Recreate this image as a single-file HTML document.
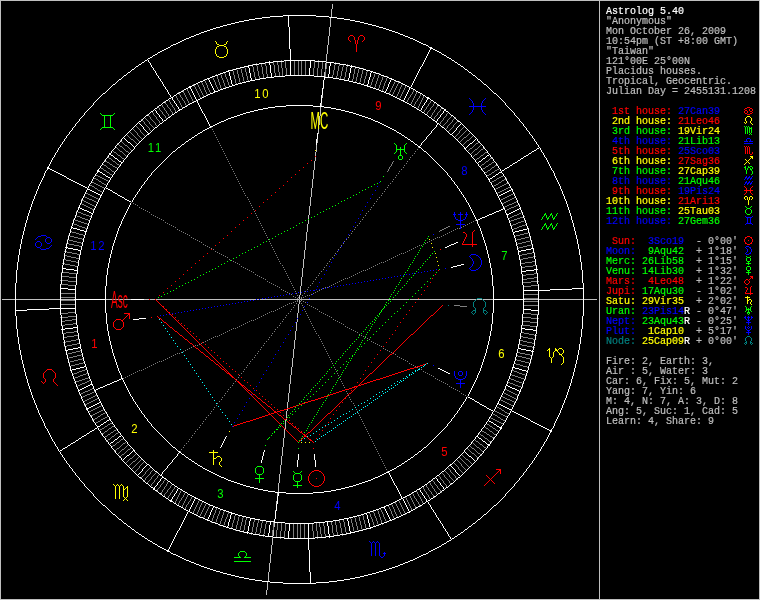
<!DOCTYPE html>
<html><head><meta charset="utf-8"><title>Astrolog 5.40</title>
<style>
html,body{margin:0;padding:0;background:#000}
#w{will-change:transform;position:relative;width:760px;height:600px;overflow:hidden;background:#000}
svg{position:absolute;left:0;top:0}
svg path,svg circle{fill:none;stroke-width:1;stroke-linecap:square}
svg path.p{stroke-linecap:butt}
svg text.h{font-family:"Liberation Sans",sans-serif;font-size:12.6px;letter-spacing:1.9px}
svg text{font-family:"Liberation Mono",monospace;font-size:10px;stroke:none}
#side{position:absolute;left:606px;top:7px;margin:0;font-family:"Liberation Mono",monospace;font-size:10px;line-height:10px;color:#bfbfbf;white-space:pre;-webkit-text-stroke:.2px;letter-spacing:0}
</style></head><body>
<div id="w">
<svg width="760" height="600" viewBox="0 0 760 600" shape-rendering="crispEdges"><g transform="translate(.5 .5)">
<path d="M2 299h595" stroke="#bfbfbf" transform="translate(-.5 0)" class="p"/><path d="M266 590v5M267 581v9M268 572v9M269 563v9M270 554v9M271 545v9M272 536v9M273 527v9M274 519v8M275 510v9M276 501v9M277 492v9M278 483v9M279 474v9M280 465v9M281 456v9M282 447v9M283 438v9M284 429v9M285 420v9M286 411v9M287 402v9M288 393v9M289 384v9M290 375v9M291 367v8M292 358v9M293 349v9M294 340v9M295 331v9M296 322v9M297 313v9M298 304v9M299 295v4M299 300v4M300 286v9M301 277v9M302 268v9M303 259v9M304 250v9M305 241v9M306 232v9M307 224v8M308 215v9M309 206v9M310 197v9M311 188v9M312 179v9M313 170v9M314 161v9M315 152v9M316 143v9M317 134v9M318 125v9M319 116v9M320 107v9M321 98v9M322 89v9M323 80v9M324 72v8M325 63v9M326 54v9M327 45v9M328 36v9M329 27v9M330 18v9M331 9v9M332 4v5" stroke="#bfbfbf" transform="translate(0 -.5)" class="p"/>
<path d="M464 137h2M131 139h2M467 140h2M476 143h2M125 145h2M120 146h2M470 148h2M475 149h2M481 149h2M120 151h2M126 151h2M114 152h2M485 152h2M475 154h2M118 155h2M481 155h2M109 158h2M122 158h2M477 158h2M490 158h2M105 161h2M113 161h2M486 161h2M107 162h2M492 162h2M110 164h2M117 164h2M482 164h2M489 164h2M104 165h2M495 165h2M113 166h2M486 166h2M115 167h2M492 167h2M101 168h2M108 168h2M483 168h2M497 169h2M104 170h2M488 170h2M495 170h2M112 171h2M107 172h2M485 172h2M492 172h2M110 174h2M489 174h2M96 175h2M487 175h2M98 176h2M501 176h2M100 177h2M499 177h2M94 178h2M102 178h2M497 178h2M96 179h2M104 179h2M504 179h2M106 180h2M494 180h2M502 180h2M99 181h2M492 181h2M92 182h2M499 182h2M94 183h2M102 183h2M506 183h2M96 184h2M104 184h2M496 184h2M504 184h2M90 185h2M98 185h2M494 185h2M502 185h2M92 186h2M100 186h2M500 186h2M102 187h2M498 187h2M508 187h2M95 188h2M496 188h2M506 188h2M504 189h2M98 190h2M502 190h2M100 191h2M500 191h2M498 192h2M86 193h2M513 193h2M88 194h2M511 194h2M90 195h2M509 195h2M83 196h2M92 196h2M507 196h2M85 197h2M94 197h2M505 197h2M514 197h2M87 198h2M96 198h2M503 198h2M512 198h2M89 199h3M501 199h2M510 199h2M82 200h2M92 200h2M508 200h2M84 201h2M94 201h2M506 201h2M516 201h2M86 202h2M96 202h2M504 202h2M514 202h2M80 203h2M88 203h2M502 203h2M512 203h2M82 204h2M90 204h2M509 204h3M518 204h2M84 205h2M92 205h2M507 205h2M516 205h2M86 206h2M94 206h2M505 206h2M514 206h2M88 207h2M503 207h2M511 207h3M90 208h2M509 208h2M92 209h2M507 209h2M505 210h2M76 211h2M78 212h3M521 212h2M81 213h2M519 213h2M83 214h3M517 214h2M75 215h2M86 215h3M514 215h3M77 216h3M89 216h2M512 216h2M523 216h2M80 217h2M510 217h2M520 217h3M82 218h3M508 218h2M517 218h3M73 219h2M85 219h3M514 219h3M75 220h3M88 220h2M511 220h3M524 220h2M78 221h3M509 221h2M521 221h3M81 222h3M518 222h3M72 223h2M84 223h3M516 223h2M74 224h3M87 224h2M513 224h3M525 224h2M77 225h2M511 225h2M522 225h3M79 226h3M519 226h3M82 227h3M517 227h2M85 228h2M514 228h3M512 229h2M70 231h2M72 232h4M528 232h2M76 233h3M524 233h4M79 234h4M520 234h4M68 235h2M83 235h2M516 235h4M70 236h4M514 236h2M529 236h2M74 237h4M525 237h4M78 238h4M521 238h4M67 239h2M82 239h2M517 239h4M69 240h4M515 240h2M530 240h2M73 241h4M526 241h4M77 242h4M522 242h4M66 243h3M81 243h2M518 243h4M69 244h5M516 244h2M531 244h2M74 245h5M527 245h4M79 246h3M523 246h4M519 247h4M517 248h2M64 251h3M67 252h5M532 252h3M72 253h5M527 253h5M77 254h3M522 254h5M64 255h3M519 255h3M67 256h4M533 256h3M71 257h5M528 257h5M76 258h3M523 258h5M63 259h3M520 259h3M66 260h5M71 261h5M532 261h4M76 262h3M525 262h7M62 263h3M521 263h4M65 264h5M70 265h5M533 265h4M75 266h3M525 266h8M521 267h4M61 272h8M69 273h8M534 273h4M526 274h8M522 275h4M61 276h8M69 277h8M534 277h4M527 278h7M523 279h4M60 280h8M68 281h8M531 281h8M523 282h8M60 284h8M68 285h8M531 285h8M523 286h8M60 293h16M523 294h16M60 297h16M523 298h16M60 300h16M523 301h16M60 304h16M523 305h16M68 312h8M60 313h8M523 313h8M531 314h8M68 316h8M60 317h8M523 317h8M531 318h8M72 319h4M65 320h7M61 321h4M522 321h8M530 322h8M73 323h4M65 324h8M61 325h4M522 325h8M530 326h8M74 331h4M66 332h8M521 332h3M62 333h4M524 333h5M529 334h5M74 335h4M534 335h3M67 336h7M520 336h3M63 337h4M523 337h5M528 338h5M76 339h3M533 339h3M71 340h5M520 340h3M66 341h5M523 341h4M63 342h3M527 342h5M77 343h3M532 343h3M72 344h5M519 344h3M67 345h5M522 345h5M64 346h3M527 346h5M532 347h3M80 350h2M76 351h4M72 352h4M517 352h3M68 353h4M520 353h5M66 354h2M81 354h2M525 354h5M77 355h4M516 355h2M530 355h3M73 356h4M518 356h4M69 357h4M522 357h4M67 358h2M82 358h2M526 358h4M78 359h4M515 359h2M530 359h2M74 360h4M517 360h4M70 361h4M521 361h4M68 362h2M83 362h2M525 362h4M79 363h4M514 363h2M529 363h2M75 364h4M516 364h4M71 365h4M520 365h3M69 366h2M523 366h4M527 367h2M85 369h2M82 370h3M512 370h2M79 371h3M514 371h3M77 372h2M517 372h2M74 373h3M86 373h2M519 373h3M72 374h2M83 374h3M510 374h2M522 374h3M80 375h3M512 375h3M525 375h2M78 376h2M515 376h3M75 377h3M88 377h2M518 377h3M73 378h2M85 378h3M509 378h2M521 378h3M82 379h3M511 379h3M524 379h2M79 380h3M89 380h2M514 380h2M76 381h3M87 381h2M516 381h3M74 382h2M85 382h2M508 382h2M519 382h3M82 383h3M510 383h3M522 383h2M80 384h2M513 384h2M78 385h2M515 385h3M76 386h2M518 386h3M521 387h2M92 388h2M90 389h2M505 389h2M88 390h2M507 390h2M85 391h3M94 391h2M509 391h2M83 392h2M92 392h2M511 392h2M81 393h2M90 393h2M504 393h2M513 393h2M79 394h2M87 394h3M506 394h2M515 394h2M85 395h2M95 395h2M508 395h2M517 395h2M83 396h2M93 396h2M501 396h2M510 396h2M81 397h2M91 397h2M503 397h2M512 397h2M89 398h2M97 398h2M505 398h2M514 398h2M87 399h2M95 399h2M507 399h3M516 399h2M85 400h2M93 400h2M501 400h2M510 400h2M83 401h2M91 401h2M503 401h2M512 401h2M89 402h2M505 402h2M514 402h2M87 403h2M507 403h2M85 404h2M509 404h2M511 405h2M99 406h2M97 407h2M497 407h2M95 408h2M499 408h2M93 409h2M91 410h2M101 410h2M502 410h2M89 411h2M99 411h2M495 411h2M97 412h2M497 412h2M505 412h2M95 413h2M103 413h2M499 413h2M507 413h2M93 414h2M101 414h2M493 414h2M501 414h2M91 415h2M495 415h2M503 415h2M98 416h2M505 416h2M105 417h2M498 417h2M95 418h2M103 418h2M491 418h2M93 419h2M101 419h2M493 419h2M501 419h2M495 420h2M503 420h2M98 421h2M497 421h2M96 422h2M499 422h2M110 423h2M501 423h2M108 424h2M487 424h2M105 426h2M112 426h2M490 426h2M102 428h2M109 428h2M486 428h2M493 428h2M100 429h2M114 430h2M496 430h2M105 431h2M482 431h2M490 431h2M111 432h2M484 432h2M102 433h2M116 433h2M108 434h2M487 434h2M494 434h2M481 435h2M105 436h2M112 436h2M490 436h2M492 437h2M485 438h2M108 439h2M121 439h2M476 441h2M489 441h2M117 442h2M123 443h2M480 444h2M113 445h2M477 447h2M484 447h2M117 448h2M472 448h2M122 449h2M128 449h2M472 453h2M478 453h2M122 454h2M130 458h2M466 459h2M133 461h2M81 199h1M84 405h1M85 192h1M88 412h1M89 184h1M90 416h1M91 181h1M92 420h1M93 177h1M94 187h1M95 174h1M95 423h1M97 189h1M97 417h1M98 180h1M98 199h1M99 430h1M100 167h1M100 415h1M100 420h1M101 182h1M101 405h1M101 434h1M102 163h1M102 192h1M103 164h1M103 169h1M103 409h1M104 160h1M104 188h1M104 427h1M104 432h1M104 437h1M105 412h1M106 166h1M106 171h1M106 185h1M106 441h1M107 156h1M107 167h1M107 416h1M107 425h1M107 430h1M107 435h1M107 440h1M108 157h1M108 181h1M108 429h1M109 163h1M109 173h1M110 169h1M110 433h1M110 438h1M111 159h1M111 170h1M111 427h1M111 437h1M111 447h1M112 150h1M112 160h1M112 165h1M112 175h1M112 422h1M112 446h1M113 151h1M113 431h1M114 172h1M114 425h1M114 435h1M114 451h1M115 146h1M115 162h1M115 434h1M115 444h1M115 450h1M116 147h1M116 153h1M116 163h1M116 429h1M116 443h1M116 449h1M117 143h1M117 148h1M117 154h1M117 168h1M117 454h1M118 144h1M118 149h1M118 432h1M118 453h1M119 145h1M119 150h1M119 165h1M119 441h1M119 447h1M119 452h1M119 457h1M120 140h1M120 156h1M120 440h1M120 446h1M120 451h1M120 456h1M121 141h1M121 157h1M121 445h1M121 450h1M121 455h1M122 142h1M122 147h1M122 152h1M122 444h1M123 143h1M123 148h1M123 153h1M123 438h1M124 144h1M124 149h1M124 154h1M124 159h1M124 448h1M124 453h1M125 150h1M125 155h1M125 442h1M125 447h1M125 452h1M125 463h1M126 134h1M126 156h1M126 441h1M126 446h1M126 451h1M126 462h1M127 135h1M127 146h1M127 445h1M127 450h1M127 461h1M128 136h1M128 147h1M128 152h1M128 444h1M128 460h1M128 466h1M129 131h1M129 137h1M129 148h1M129 153h1M129 459h1M129 465h1M130 132h1M130 138h1M130 149h1M130 448h1M130 464h1M131 133h1M131 150h1M131 447h1M131 463h1M131 469h1M132 128h1M132 134h1M132 457h1M132 462h1M132 468h1M133 129h1M133 135h1M133 140h1M133 456h1M133 467h1M134 130h1M134 136h1M134 141h1M134 455h1M134 466h1M134 472h1M135 125h1M135 131h1M135 137h1M135 142h1M135 454h1M135 460h1M135 465h1M135 471h1M136 126h1M136 132h1M136 138h1M136 143h1M136 453h1M136 459h1M136 464h1M136 470h1M137 127h1M137 139h1M137 144h1M137 458h1M137 463h1M137 469h1M138 128h1M138 135h1M138 140h1M138 457h1M138 462h1M138 468h1M139 129h1M139 136h1M139 141h1M139 456h1M139 461h1M140 137h1M140 460h1M140 465h1M140 478h1M141 119h1M141 132h1M141 138h1M141 459h1M141 464h1M141 477h1M142 120h1M142 133h1M142 139h1M142 463h1M142 476h1M143 121h1M143 134h1M143 462h1M143 475h1M143 481h1M144 117h1M144 135h1M144 461h1M144 474h1M144 480h1M145 118h1M145 124h1M145 136h1M146 119h1M146 125h1M146 471h1M146 477h1M146 483h1M147 114h1M147 120h1M147 126h1M147 470h1M147 476h1M147 482h1M148 115h1M148 121h1M148 127h1M148 469h1M148 475h1M148 481h1M149 116h1M149 468h1M149 474h1M149 480h1M150 124h1M150 130h1M150 467h1M150 479h1M150 486h1M151 111h1M151 119h1M151 125h1M151 131h1M151 471h1M152 112h1M152 120h1M152 126h1M152 470h1M152 476h1M152 483h1M153 121h1M153 127h1M153 469h1M153 475h1M153 482h1M154 115h1M154 122h1M154 128h1M154 474h1M155 116h1M155 473h1M155 479h1M156 125h1M156 472h1M156 478h1M156 491h1M157 106h1M157 119h1M157 126h1M158 107h1M158 120h1M158 475h1M158 488h1M159 474h1M159 487h1M160 110h1M160 123h1M160 494h1M161 104h1M161 111h1M161 484h1M162 483h1M163 107h1M163 114h1M163 489h1M163 496h1M164 101h1M164 115h1M164 480h1M165 110h1M165 479h1M165 486h1M165 493h1M166 104h1M166 118h1M166 492h1M167 113h1M167 498h1M168 99h1M168 107h1M168 481h1M168 489h1M169 108h1M169 116h1M169 488h1M169 495h1M171 104h1M171 111h1M171 485h1M171 492h1M172 484h1M173 107h1M173 114h1M173 489h1M174 503h1M175 95h1M175 486h1M176 112h1M177 505h1M178 92h1M178 100h1M180 500h1M181 97h1M181 490h1M181 507h1M182 90h1M182 107h1M182 497h1M183 100h1M184 509h1M185 492h1M186 88h1M186 105h1M187 504h1M188 494h1M189 103h1M189 501h1M192 496h1M192 513h1M193 84h1M193 101h1M199 500h1M206 503h1M398 500h1M399 81h1M399 98h1M405 497h1M406 85h1M406 102h1M409 97h1M409 495h1M410 104h1M411 94h1M412 493h1M412 510h1M413 106h1M414 89h1M415 498h1M416 101h1M416 491h1M416 508h1M417 91h1M417 108h1M417 501h1M418 98h1M419 496h1M420 506h1M421 93h1M422 486h1M423 112h1M423 503h1M424 95h1M425 109h1M425 484h1M425 491h1M426 114h1M427 106h1M427 487h1M427 494h1M428 111h1M429 103h1M429 110h1M429 482h1M429 490h1M430 117h1M430 491h1M430 499h1M431 100h1M431 107h1M431 485h1M432 106h1M432 480h1M432 494h1M433 112h1M433 119h1M433 481h1M433 488h1M434 103h1M434 497h1M435 102h1M435 109h1M435 116h1M435 484h1M435 491h1M436 115h1M436 485h1M437 494h1M438 104h1M438 112h1M438 475h1M438 488h1M439 111h1M439 124h1M439 476h1M439 489h1M441 108h1M441 121h1M441 472h1M441 479h1M441 492h1M442 107h1M442 120h1M442 126h1M442 473h1M442 480h1M443 125h1M443 474h1M444 117h1M444 124h1M444 470h1M444 483h1M445 116h1M445 123h1M445 129h1M445 471h1M445 477h1M445 484h1M446 122h1M446 128h1M446 472h1M446 478h1M447 113h1M447 467h1M447 473h1M447 479h1M447 487h1M448 112h1M448 119h1M448 125h1M448 131h1M448 468h1M448 474h1M448 480h1M449 118h1M449 124h1M449 130h1M449 469h1M450 117h1M450 123h1M450 129h1M450 477h1M450 483h1M451 116h1M451 122h1M451 128h1M451 472h1M451 478h1M451 484h1M452 115h1M452 127h1M452 473h1M452 479h1M453 119h1M453 462h1M453 474h1M453 480h1M454 118h1M454 124h1M454 137h1M454 463h1M454 475h1M454 481h1M455 117h1M455 123h1M455 136h1M455 464h1M456 122h1M456 135h1M456 459h1M456 465h1M456 478h1M457 121h1M457 134h1M457 139h1M457 460h1M457 466h1M457 479h1M458 120h1M458 133h1M458 138h1M458 461h1M459 137h1M459 142h1M459 457h1M459 462h1M459 469h1M460 130h1M460 136h1M460 141h1M460 458h1M460 463h1M460 470h1M461 129h1M461 135h1M461 140h1M461 454h1M461 459h1M461 471h1M462 128h1M462 134h1M462 139h1M462 145h1M462 455h1M462 460h1M462 466h1M462 472h1M463 127h1M463 133h1M463 138h1M463 144h1M463 456h1M463 461h1M463 467h1M463 473h1M464 126h1M464 132h1M464 143h1M464 457h1M464 462h1M464 468h1M465 131h1M465 142h1M465 458h1M465 463h1M465 469h1M466 130h1M466 136h1M466 141h1M466 464h1M466 470h1M467 129h1M467 135h1M467 151h1M467 448h1M467 465h1M468 134h1M468 150h1M468 449h1M468 460h1M468 466h1M469 133h1M469 139h1M469 149h1M469 445h1M469 450h1M469 461h1M469 467h1M470 132h1M470 138h1M470 154h1M470 446h1M470 451h1M470 462h1M471 137h1M471 153h1M471 447h1M471 452h1M471 463h1M472 136h1M472 147h1M472 152h1M472 157h1M472 442h1M472 464h1M473 135h1M473 146h1M473 151h1M473 156h1M473 443h1M474 145h1M474 150h1M474 155h1M474 439h1M474 444h1M474 449h1M474 454h1M475 144h1M475 160h1M475 440h1M475 445h1M475 450h1M475 455h1M476 159h1M476 446h1M476 451h1M476 456h1M477 148h1M477 153h1M477 452h1M477 457h1M478 142h1M478 147h1M478 152h1M478 442h1M478 458h1M479 141h1M479 146h1M479 151h1M479 157h1M479 433h1M479 443h1M479 448h1M480 145h1M480 150h1M480 156h1M480 166h1M480 434h1M480 449h1M480 454h1M481 144h1M481 165h1M481 430h1M481 450h1M481 455h1M482 169h1M482 445h1M482 451h1M483 148h1M483 154h1M483 436h1M483 446h1M483 452h1M484 147h1M484 153h1M484 163h1M484 173h1M484 426h1M484 437h1M485 162h1M485 167h1M485 427h1M486 176h1M486 423h1M486 433h1M486 448h1M487 151h1M487 171h1M487 439h1M488 160h1M488 165h1M488 429h1M488 440h1M489 159h1M489 425h1M489 430h1M489 435h1M490 169h1M490 417h1M491 163h1M491 168h1M491 173h1M491 182h1M491 442h1M492 157h1M492 413h1M492 427h1M492 432h1M493 186h1M493 433h1M494 161h1M494 166h1M494 171h1M494 410h1M494 438h1M495 189h1M495 429h1M496 179h1M496 406h1M496 435h1M497 164h1M497 193h1M497 416h1M498 183h1M498 431h1M499 168h1M500 200h1M500 399h1M500 418h1M501 181h1M501 409h1M503 175h1M503 392h1M503 424h1M504 411h1M505 421h1M506 178h1M507 417h1M508 182h1M509 414h1M510 186h1M513 406h1" stroke="#7f7f7f" transform="translate(-.5 0)" class="p"/><path d="M137 133v2M139 466v2M140 130v2M144 122v2M145 472v2M145 478v2M149 122v2M149 128v2M150 117v2M150 472v2M151 477v2M151 484v2M153 113v2M154 480v2M155 123v2M156 117v2M157 476v2M157 489v2M159 108v2M159 121v2M160 485v2M161 492v2M162 105v2M162 112v2M162 490v2M163 481v2M164 108v2M164 487v2M164 494v2M165 102v2M165 116v2M166 111v2M166 484v2M167 105v2M167 482v2M167 490v2M168 114v2M168 496v2M169 100v2M170 102v2M170 109v2M170 486v2M170 493v2M172 105v2M172 112v2M172 490v2M174 108v2M174 487v2M175 110v2M175 501v2M176 96v2M176 499v2M177 98v2M177 497v2M178 495v2M178 503v2M179 93v2M179 101v2M179 493v2M179 501v2M180 95v2M180 103v2M180 491v2M181 105v2M181 498v2M182 98v2M182 505v2M183 91v2M183 495v2M183 503v2M184 93v2M184 101v2M184 493v2M184 501v2M185 95v2M185 103v2M185 499v2M185 507v2M186 97v2M186 497v2M186 505v2M187 89v2M187 99v2M187 495v2M188 91v2M188 101v2M188 502v2M189 93v2M190 95v2M190 499v2M191 97v2M191 497v2M192 99v2M193 511v2M194 85v2M194 509v2M195 87v2M195 507v2M196 89v2M196 505v2M196 514v2M197 83v2M197 91v2M197 503v2M197 512v2M198 85v2M198 93v2M198 501v2M198 510v2M199 87v2M199 95v2M199 507v3M199 516v2M200 89v2M200 97v2M200 505v2M200 514v2M201 81v2M201 91v2M201 503v2M201 512v2M202 83v2M202 93v2M202 501v2M202 510v2M203 85v2M203 95v2M203 508v2M203 517v2M204 79v2M204 87v3M204 506v2M204 515v2M205 81v2M205 90v2M205 504v2M205 513v2M206 83v2M206 92v2M206 511v2M207 85v3M207 94v2M207 509v2M208 88v2M208 507v2M209 90v2M209 505v2M210 92v2M211 521v2M212 76v2M212 518v3M213 78v2M213 515v3M214 80v2M214 513v2M215 82v3M215 510v3M215 522v2M216 74v2M216 85v2M216 508v2M216 519v3M217 76v3M217 87v2M217 516v3M218 79v3M218 89v2M218 514v2M219 82v3M219 511v3M219 524v2M220 73v2M220 85v3M220 509v2M220 521v3M221 75v3M221 88v2M221 518v3M222 78v2M222 515v3M223 80v3M223 512v3M223 525v2M224 72v2M224 83v3M224 510v2M224 522v3M225 74v3M225 86v2M225 519v3M226 77v2M226 517v2M227 79v3M227 514v3M228 82v3M228 512v2M229 85v2M231 527v2M232 69v2M232 523v4M233 71v4M233 520v3M234 75v4M234 516v4M235 79v4M235 514v2M235 529v2M236 68v2M236 83v2M236 525v4M237 70v4M237 521v4M238 74v4M238 517v4M239 78v4M239 515v2M239 530v2M240 67v2M240 82v2M240 526v4M241 69v4M241 522v4M242 73v4M242 518v4M243 77v4M243 516v2M243 530v3M244 66v2M244 81v2M244 525v5M245 68v4M245 520v5M246 72v4M246 517v3M247 76v4M248 80v2M251 532v3M252 64v3M252 527v5M253 67v5M253 522v5M254 72v5M254 519v3M255 77v3M255 532v3M256 63v3M256 527v5M257 66v5M257 523v4M258 71v5M258 520v3M259 76v3M259 533v3M260 528v5M261 63v4M261 523v5M262 67v7M262 520v3M263 74v4M263 534v3M264 529v5M265 62v4M265 524v5M266 66v8M266 521v3M267 74v4M272 530v8M273 61v4M273 522v8M274 65v8M275 73v4M276 530v8M277 61v4M277 522v8M278 65v7M279 72v4M280 531v8M281 60v8M281 523v8M282 68v8M284 531v8M285 60v8M285 523v8M286 68v8M293 523v16M294 60v16M297 523v16M298 60v16M300 523v16M301 60v16M304 523v16M305 60v16M312 523v8M313 68v8M313 531v8M314 60v8M316 523v8M317 68v8M317 531v8M318 60v8M319 523v4M320 527v7M321 69v8M321 534v4M322 61v8M323 522v4M324 526v8M325 69v8M325 534v4M326 61v8M331 521v4M332 75v3M332 525v8M333 70v5M333 533v4M334 65v5M335 62v3M335 521v4M336 76v3M336 525v7M337 71v5M337 532v4M338 66v5M339 63v3M339 520v3M340 76v3M340 523v5M341 71v5M341 528v5M342 67v4M342 533v3M343 64v3M343 519v3M344 77v3M344 522v5M345 72v5M345 527v5M346 67v5M346 532v3M347 64v3M350 517v2M351 519v4M352 79v3M352 523v4M353 74v5M353 527v4M354 69v5M354 516v2M354 531v2M355 66v3M355 81v2M355 518v4M356 77v4M356 522v4M357 73v4M357 526v4M358 69v4M358 515v2M358 530v2M359 67v2M359 82v2M359 517v4M360 78v4M360 521v4M361 74v4M361 525v4M362 70v4M362 514v2M362 529v2M363 68v2M363 83v2M363 516v4M364 79v4M364 520v4M365 76v3M365 524v4M366 72v4M366 528v2M367 70v2M369 512v2M370 85v2M370 514v3M371 82v3M371 517v2M372 79v3M372 519v3M373 77v2M373 511v2M373 522v3M374 74v3M374 87v2M374 513v3M374 525v2M375 72v2M375 84v3M375 516v2M376 81v3M376 518v3M377 78v3M377 509v2M377 521v3M378 75v3M378 88v2M378 511v3M378 524v2M379 73v2M379 85v3M379 514v3M380 82v3M380 508v2M380 517v3M381 80v2M381 510v2M381 520v3M382 77v3M382 89v2M382 512v2M382 523v2M383 75v2M383 86v3M383 514v3M384 83v3M384 517v2M385 81v2M385 519v2M386 78v3M386 521v2M387 76v2M388 505v2M389 92v2M389 507v2M390 90v2M390 509v2M391 88v2M391 503v2M391 511v3M392 86v2M392 94v2M392 505v2M392 514v2M393 84v2M393 92v2M393 507v2M393 516v2M394 82v2M394 90v2M394 509v3M394 518v2M395 80v2M395 88v2M395 502v2M395 512v2M396 86v2M396 96v2M396 504v2M396 514v2M397 84v2M397 94v2M397 506v2M397 516v2M398 82v2M398 92v2M398 508v2M399 89v3M399 501v2M399 510v2M400 87v2M400 96v2M400 503v2M400 512v2M401 85v2M401 94v2M401 505v2M401 514v2M402 83v2M402 92v2M402 507v2M403 90v2M403 509v2M404 88v2M404 511v2M405 86v2M405 513v2M406 498v2M407 100v2M407 500v2M408 98v2M408 502v2M409 504v2M410 95v2M410 496v2M410 506v2M411 102v2M411 498v2M411 508v2M412 92v2M412 100v2M412 500v2M413 90v2M413 98v2M413 494v2M413 502v2M414 96v2M414 104v2M414 496v2M414 504v2M415 94v2M415 102v2M415 506v2M416 92v2M416 499v2M417 99v2M417 492v2M418 106v2M418 494v2M418 502v2M419 96v2M419 104v2M419 504v2M420 94v2M420 102v2M420 497v2M421 100v2M421 499v2M422 98v2M422 501v2M423 96v2M423 487v2M424 110v2M424 489v2M426 107v2M426 485v2M426 492v2M427 112v2M428 104v2M428 488v2M428 495v2M429 497v2M430 101v2M430 108v2M430 483v2M431 115v2M431 492v2M432 113v2M432 486v2M433 104v2M433 495v2M434 110v2M434 117v2M434 482v2M434 489v2M436 107v2M436 492v2M437 105v2M437 113v2M437 486v2M440 109v2M440 122v2M440 477v2M440 490v2M443 118v2M443 481v2M444 475v2M446 114v2M446 485v2M447 120v2M447 126v2M449 475v2M449 481v2M450 470v2M452 120v2M453 125v2M455 476v2M458 467v2M459 131v2M461 464v2" stroke="#7f7f7f" transform="translate(0 -.5)" class="p"/>
<path d="M128 142h2M470 143h2M111 155h2M487 155h2M115 158h2M483 158h2M119 161h2M479 161h2M98 171h2M100 172h2M499 172h2M103 174h2M496 174h2M106 176h2M493 176h2M108 177h2M490 178h2M88 189h2M511 189h2M90 190h2M509 190h2M92 191h2M507 191h2M94 192h2M505 192h2M96 193h2M503 193h2M98 194h2M501 194h2M499 195h2M78 207h2M80 208h2M519 208h2M82 209h2M517 209h2M84 210h3M515 210h2M87 211h2M513 211h2M89 212h2M511 212h2M91 213h2M509 213h2M507 214h2M71 227h2M73 228h4M527 228h2M77 229h3M523 229h4M80 230h4M519 230h4M84 231h2M515 231h4M513 232h2M65 247h3M68 248h5M531 248h3M73 249h5M526 249h5M78 250h3M521 250h5M518 251h3M62 268h4M66 269h8M534 269h4M74 270h4M526 270h8M522 271h4M60 288h8M68 289h8M523 290h16M60 308h16M523 309h8M531 310h8M73 327h4M65 328h8M521 328h4M61 329h4M525 329h8M533 330h4M78 347h3M73 348h5M518 348h3M68 349h5M521 349h5M65 350h3M526 350h5M531 351h3M84 366h2M80 367h4M513 367h2M76 368h4M515 368h4M72 369h4M519 369h3M70 370h2M522 370h4M526 371h2M90 384h2M88 385h2M506 385h2M86 386h2M508 386h2M84 387h2M510 387h2M82 388h2M512 388h3M80 389h2M515 389h2M78 390h2M517 390h2M519 391h2M99 402h2M97 403h2M95 404h2M499 404h2M93 405h2M501 405h2M91 406h2M503 406h2M89 407h2M505 407h2M87 408h2M507 408h2M509 409h2M107 420h2M489 421h2M104 422h2M491 422h2M101 424h2M494 424h2M98 426h2M497 426h2M499 427h2M119 436h2M479 438h2M115 439h2M483 441h2M111 442h2M487 444h2M127 455h2M469 456h2M86 409h1M87 188h1M97 170h1M97 427h1M100 195h1M100 425h1M102 173h1M103 423h1M105 175h1M106 421h1M109 153h1M109 419h1M109 444h1M110 154h1M110 178h1M110 443h1M113 156h1M113 441h1M114 157h1M114 440h1M117 159h1M117 438h1M118 160h1M118 437h1M121 162h1M121 435h1M122 460h1M123 137h1M123 459h1M124 138h1M124 458h1M125 139h1M125 457h1M126 140h1M126 456h1M127 141h1M129 454h1M130 143h1M130 453h1M131 144h1M131 452h1M132 145h1M132 451h1M133 146h1M133 450h1M134 147h1M137 475h1M138 122h1M138 474h1M139 123h1M139 473h1M140 124h1M140 472h1M141 125h1M141 471h1M142 126h1M143 468h1M144 129h1M144 467h1M145 130h1M145 466h1M146 131h1M146 465h1M147 132h1M147 464h1M148 133h1M153 489h1M154 109h1M155 110h1M155 486h1M156 485h1M157 113h1M158 114h1M158 482h1M159 481h1M160 117h1M161 118h1M161 478h1M162 477h1M163 121h1M170 501h1M171 97h1M173 100h1M173 496h1M175 103h1M175 493h1M177 106h1M178 488h1M179 109h1M188 511h1M189 86h1M195 498h1M402 498h1M403 100h1M410 87h1M419 489h1M420 110h1M421 492h1M423 105h1M423 495h1M425 102h1M425 498h1M427 501h1M428 97h1M435 477h1M436 121h1M436 478h1M438 118h1M438 481h1M439 117h1M439 482h1M441 114h1M441 485h1M442 113h1M442 486h1M444 110h1M444 489h1M445 109h1M450 465h1M451 134h1M451 466h1M452 133h1M452 467h1M453 132h1M453 468h1M454 131h1M454 469h1M455 130h1M456 472h1M457 127h1M457 473h1M458 126h1M458 474h1M459 125h1M459 475h1M460 124h1M460 476h1M461 123h1M464 451h1M465 148h1M465 452h1M466 147h1M466 453h1M467 146h1M467 454h1M468 145h1M468 455h1M469 144h1M471 457h1M472 142h1M472 458h1M473 141h1M473 459h1M474 140h1M474 460h1M475 139h1M475 461h1M476 138h1M477 163h1M477 436h1M478 162h1M478 437h1M481 160h1M481 439h1M482 159h1M482 440h1M485 157h1M485 442h1M486 156h1M486 443h1M488 420h1M489 154h1M489 179h1M489 445h1M492 177h1M493 423h1M495 175h1M496 425h1M498 173h1M498 196h1M498 403h1M501 171h1M501 428h1M511 410h1" stroke="#fff" transform="translate(-.5 0)" class="p"/><path d="M142 469v2M143 127v2M154 487v2M156 111v2M157 483v2M159 115v2M160 479v2M162 119v2M171 499v2M172 98v2M172 497v2M174 101v2M174 494v2M176 104v2M176 491v2M177 489v2M178 107v2M189 509v2M190 87v2M190 507v2M191 89v2M191 505v2M192 91v2M192 503v2M193 93v2M193 501v2M194 95v2M194 499v2M195 97v2M196 99v2M207 519v2M208 78v2M208 517v2M209 80v2M209 515v2M210 82v2M210 512v3M211 84v2M211 510v2M212 86v2M212 508v2M213 88v2M213 506v2M214 90v2M227 526v2M228 70v2M228 522v4M229 72v4M229 519v3M230 76v4M230 515v4M231 80v4M231 513v2M232 84v2M247 531v3M248 65v3M248 526v5M249 68v5M249 521v5M250 73v5M250 518v3M251 78v3M268 533v4M269 61v4M269 525v8M270 65v8M270 521v4M271 73v4M288 531v8M289 523v8M290 60v16M308 523v16M309 68v8M310 60v8M327 522v4M328 74v4M328 526v8M329 66v8M329 534v4M330 62v4M347 518v3M348 78v3M348 521v5M349 73v5M349 526v5M350 68v5M350 531v3M351 65v3M366 513v2M367 84v2M367 515v4M368 80v4M368 519v4M369 77v3M369 523v4M370 73v4M370 527v2M371 71v2M384 507v2M385 91v2M385 509v2M386 89v2M386 511v2M387 87v2M387 513v2M388 84v3M388 515v2M389 82v2M389 517v2M390 80v2M390 519v2M391 78v2M403 499v2M404 98v2M404 501v2M405 96v2M405 503v2M406 94v2M406 505v2M407 92v2M407 507v2M408 90v2M408 509v2M409 88v2M409 511v2M420 490v2M421 108v2M422 106v2M422 493v2M424 103v2M424 496v2M426 100v2M426 499v2M427 98v2M437 119v2M437 479v2M440 115v2M440 483v2M443 111v2M443 487v2M455 470v2M456 128v2" stroke="#fff" transform="translate(0 -.5)" class="p"/>
<path d="M283 15h33M270 16h13M316 16h13M262 17h8M329 17h8M255 18h7M337 18h7M249 19h6M344 19h6M244 20h5M350 20h5M239 21h5M355 21h5M235 22h4M360 22h4M231 23h4M364 23h4M227 24h4M368 24h4M223 25h4M372 25h4M220 26h3M376 26h3M216 27h4M379 27h4M213 28h3M383 28h3M210 29h3M386 29h3M207 30h3M389 30h3M204 31h3M392 31h3M201 32h3M395 32h3M199 33h2M398 33h2M196 34h3M400 34h3M194 35h2M403 35h2M191 36h3M405 36h3M189 37h2M408 37h2M186 38h3M410 38h3M184 39h2M413 39h2M182 40h2M415 40h2M180 41h2M417 41h2M178 42h2M419 42h2M176 43h2M421 43h2M173 44h3M423 44h3M171 45h2M426 45h2M168 47h2M429 47h3M166 48h2M430 48h3M164 49h2M433 49h2M162 50h2M435 50h2M160 51h2M437 51h2M158 52h2M439 52h2M155 54h2M442 54h2M153 55h2M444 55h2M150 57h2M447 57h2M148 58h2M449 58h2M145 60h2M284 60h31M452 60h2M273 61h11M315 61h11M142 62h2M265 62h8M326 62h8M455 62h2M259 63h6M334 63h6M139 64h2M253 64h6M340 64h6M458 64h2M249 65h4M346 65h4M136 66h2M244 66h5M350 66h5M461 66h2M240 67h4M355 67h4M236 68h4M359 68h4M132 69h2M233 69h3M363 69h3M465 69h2M229 70h4M366 70h4M226 71h3M370 71h3M128 72h2M223 72h3M373 72h3M469 72h2M220 73h3M376 73h3M218 74h2M379 74h2M124 75h2M215 75h3M285 75h29M381 75h3M473 75h2M212 76h3M274 76h11M314 76h11M384 76h3M210 77h2M266 77h8M324 77h9M387 77h2M207 78h3M260 78h6M333 78h6M389 78h3M119 79h2M205 79h2M255 79h5M339 79h5M392 79h2M478 79h2M203 80h2M250 80h5M344 80h5M394 80h2M200 81h3M246 81h4M349 81h4M396 81h3M198 82h2M242 82h4M353 82h4M399 82h2M196 83h2M238 83h4M357 83h4M401 83h2M113 84h2M194 84h2M235 84h3M361 84h3M403 84h2M484 84h2M192 85h2M232 85h3M364 85h3M405 85h2M190 86h2M229 86h3M367 86h3M407 86h2M188 87h2M226 87h3M370 87h3M409 87h2M186 88h2M223 88h3M373 88h3M411 88h2M184 89h2M220 89h3M376 89h3M413 89h2M218 90h2M379 90h2M181 91h2M215 91h3M381 91h3M416 91h2M179 92h2M213 92h2M384 92h2M418 92h2M103 93h2M177 93h2M210 93h3M386 93h3M420 93h2M494 93h2M208 94h2M389 94h2M174 95h2M206 95h2M391 95h2M423 95h2M204 96h2M393 96h2M171 97h2M202 97h2M395 97h2M426 97h2M169 98h2M200 98h2M397 98h2M428 98h2M198 99h2M399 99h2M166 100h2M196 100h2M401 100h2M431 100h2M194 101h2M403 101h2M163 102h2M192 102h2M405 102h2M434 102h2M190 103h2M407 103h2M188 104h2M409 104h2M159 105h2M286 105h27M438 105h2M185 106h2M275 106h11M313 106h11M412 106h2M183 107h2M268 107h7M324 107h7M414 107h2M155 108h2M263 108h5M331 108h5M442 108h2M180 109h2M258 109h5M336 109h5M417 109h2M178 110h2M254 110h4M341 110h4M419 110h2M151 111h2M250 111h4M345 111h4M446 111h2M175 112h2M246 112h4M349 112h4M422 112h2M243 113h3M353 113h3M172 114h2M240 114h3M356 114h3M425 114h2M146 115h2M237 115h3M359 115h3M451 115h2M234 116h3M362 116h3M168 117h2M231 117h3M365 117h3M429 117h2M228 118h3M368 118h3M226 119h2M371 119h2M164 120h2M224 120h2M373 120h2M433 120h2M139 121h2M221 121h3M375 121h3M458 121h2M219 122h2M378 122h2M160 123h2M217 123h2M380 123h2M437 123h2M215 124h2M382 124h2M213 125h2M384 125h2M210 126h3M386 126h2M155 127h2M209 127h2M388 127h2M442 127h2M207 128h2M390 128h2M205 129h2M392 129h2M203 130h2M394 130h2M200 132h2M397 132h2M198 133h2M399 133h2M147 134h2M450 134h2M195 135h2M402 135h2M192 137h2M405 137h2M189 139h2M408 139h2M186 141h2M411 141h2M182 144h2M415 144h2M418 146h2M178 147h2M419 147h2M537 148h2M534 150h2M173 151h2M424 151h2M532 151h2M529 153h2M526 155h2M524 156h2M521 158h2M518 160h2M515 162h2M513 163h2M510 165h2M47 167h2M507 167h2M47 168h3M505 168h2M50 169h2M52 170h2M502 170h2M54 171h2M56 172h2M58 173h2M60 174h2M62 175h2M64 176h2M67 178h2M69 179h2M71 180h2M73 181h2M75 182h2M77 183h2M79 184h2M81 185h2M83 186h2M85 187h2M106 188h2M108 189h2M110 190h2M113 192h2M115 193h2M118 195h2M120 196h2M122 197h2M125 199h2M127 200h2M129 201h2M503 208h2M501 209h2M499 210h2M496 211h3M494 212h2M492 213h2M489 214h3M487 215h2M485 216h2M482 217h3M480 218h2M478 219h2M476 220h2M572 288h12M550 289h22M538 290h12M74 299h32M493 299h32M49 308h12M27 309h22M15 310h12M121 378h2M119 379h2M117 380h2M114 381h3M112 382h2M110 383h2M107 384h3M105 385h2M103 386h2M100 387h3M98 388h2M96 389h2M94 390h2M468 397h2M470 398h2M472 399h2M475 401h2M477 402h2M480 404h2M482 405h2M484 406h2M487 408h2M489 409h2M491 410h2M512 411h2M514 412h2M516 413h2M518 414h2M520 415h2M522 416h2M524 417h2M526 418h2M528 419h2M531 421h2M533 422h2M535 423h2M537 424h2M539 425h2M541 426h2M543 427h2M95 428h2M545 428h2M547 429h2M92 430h2M549 430h3M90 431h2M550 431h2M87 433h2M84 435h2M82 436h2M79 438h2M76 440h2M73 442h2M71 443h2M68 445h2M65 447h2M173 447h2M424 447h2M63 448h2M60 450h2M178 451h2M419 451h2M179 452h2M182 454h2M415 454h2M186 457h2M411 457h2M189 459h2M408 459h2M192 461h2M405 461h2M195 463h2M402 463h2M147 464h2M450 464h2M198 465h2M399 465h2M200 466h2M397 466h2M203 468h2M394 468h2M205 469h2M392 469h2M207 470h2M390 470h2M155 471h2M209 471h2M388 471h2M442 471h2M211 472h2M386 472h3M213 473h2M384 473h2M215 474h2M382 474h2M160 475h2M217 475h2M380 475h2M437 475h2M219 476h2M378 476h2M139 477h2M221 477h3M375 477h3M458 477h2M164 478h2M224 478h2M373 478h2M433 478h2M226 479h2M371 479h2M228 480h3M368 480h3M168 481h2M231 481h3M365 481h3M429 481h2M234 482h3M362 482h3M146 483h2M237 483h3M359 483h3M451 483h2M172 484h2M240 484h3M356 484h3M425 484h2M243 485h3M353 485h3M175 486h2M246 486h4M349 486h4M422 486h2M151 487h2M250 487h4M345 487h4M446 487h2M178 488h2M254 488h4M341 488h4M419 488h2M180 489h2M258 489h5M336 489h5M417 489h2M155 490h2M263 490h5M331 490h5M442 490h2M183 491h2M268 491h7M324 491h7M414 491h2M185 492h2M275 492h11M313 492h11M412 492h2M159 493h2M286 493h27M438 493h2M188 494h2M409 494h2M190 495h2M407 495h2M163 496h2M192 496h2M405 496h2M434 496h2M194 497h2M403 497h2M166 498h2M196 498h2M401 498h2M431 498h2M198 499h2M399 499h2M169 500h2M200 500h2M397 500h2M428 500h2M171 501h2M202 501h2M395 501h2M426 501h2M204 502h2M393 502h2M174 503h2M206 503h2M391 503h2M423 503h2M208 504h2M389 504h2M103 505h2M177 505h2M210 505h3M386 505h3M420 505h2M494 505h2M179 506h2M213 506h2M384 506h2M418 506h2M181 507h2M215 507h3M381 507h3M416 507h2M218 508h2M379 508h2M184 509h2M220 509h3M376 509h3M413 509h2M186 510h2M223 510h3M373 510h3M411 510h2M188 511h2M226 511h3M370 511h3M409 511h2M190 512h2M229 512h3M367 512h3M407 512h2M192 513h2M232 513h3M364 513h3M405 513h2M113 514h2M194 514h2M235 514h3M361 514h3M403 514h2M484 514h2M196 515h2M238 515h4M357 515h4M401 515h2M198 516h2M242 516h4M353 516h4M399 516h2M200 517h3M246 517h4M349 517h4M396 517h3M203 518h2M250 518h5M344 518h5M394 518h2M119 519h2M205 519h2M255 519h5M339 519h5M392 519h2M478 519h2M207 520h3M260 520h6M333 520h6M389 520h3M210 521h2M266 521h9M325 521h8M387 521h2M212 522h3M274 522h11M314 522h11M384 522h3M124 523h2M215 523h3M285 523h29M381 523h3M473 523h2M218 524h2M379 524h2M220 525h3M376 525h3M128 526h2M223 526h3M373 526h3M469 526h2M226 527h3M370 527h3M229 528h4M366 528h4M132 529h2M233 529h3M363 529h3M465 529h2M236 530h4M359 530h4M240 531h4M355 531h4M136 532h2M244 532h5M350 532h5M461 532h2M249 533h4M346 533h4M139 534h2M253 534h6M340 534h6M458 534h2M259 535h6M334 535h6M142 536h2M265 536h8M326 536h8M455 536h2M273 537h11M315 537h11M145 538h2M284 538h31M452 538h2M148 540h2M449 540h2M150 541h2M447 541h2M153 543h2M444 543h2M155 544h2M442 544h2M158 546h2M439 546h2M160 547h2M437 547h2M162 548h2M435 548h2M164 549h2M433 549h2M166 550h3M431 550h2M167 551h3M429 551h2M171 553h2M426 553h2M173 554h3M423 554h3M176 555h2M421 555h2M178 556h2M419 556h2M180 557h2M417 557h2M182 558h2M415 558h2M184 559h2M413 559h2M186 560h3M410 560h3M189 561h2M408 561h2M191 562h3M405 562h3M194 563h2M403 563h2M196 564h3M400 564h3M199 565h2M398 565h2M201 566h3M395 566h3M204 567h3M392 567h3M207 568h3M389 568h3M210 569h3M386 569h3M213 570h3M383 570h3M216 571h4M379 571h4M220 572h3M376 572h3M223 573h4M372 573h4M227 574h4M368 574h4M231 575h4M364 575h4M235 576h4M360 576h4M239 577h5M355 577h5M244 578h5M350 578h5M249 579h6M344 579h6M255 580h7M337 580h7M262 581h8M329 581h8M270 582h13M316 582h13M283 583h33M46 170h1M46 428h1M47 169h1M48 166h1M53 157h1M53 441h1M56 152h1M56 446h1M59 147h1M59 451h1M61 144h1M61 454h1M62 449h1M63 141h1M63 457h1M65 138h1M65 460h1M66 177h1M67 135h1M67 446h1M67 463h1M68 134h1M68 464h1M70 131h1M70 444h1M70 467h1M71 130h1M71 468h1M73 127h1M73 471h1M74 126h1M74 472h1M75 441h1M76 123h1M76 475h1M77 122h1M77 476h1M78 121h1M78 439h1M78 477h1M80 118h1M80 480h1M81 117h1M81 437h1M81 481h1M82 116h1M82 482h1M83 115h1M83 483h1M85 112h1M85 486h1M86 111h1M86 434h1M86 487h1M87 110h1M87 488h1M88 109h1M88 489h1M89 108h1M89 432h1M89 490h1M90 107h1M90 183h1M90 415h1M90 491h1M91 106h1M91 492h1M92 105h1M92 493h1M94 102h1M94 176h1M94 389h1M94 422h1M94 429h1M94 496h1M95 101h1M95 497h1M96 100h1M96 173h1M96 425h1M96 498h1M97 99h1M97 499h1M98 98h1M98 500h1M99 97h1M99 168h1M99 430h1M99 501h1M100 96h1M100 502h1M101 95h1M101 165h1M101 433h1M101 503h1M102 94h1M102 504h1M103 162h1M103 436h1M104 161h1M104 437h1M105 92h1M105 187h1M105 411h1M105 506h1M106 91h1M106 158h1M106 440h1M106 507h1M107 90h1M107 157h1M107 441h1M107 508h1M108 89h1M108 182h1M108 416h1M108 509h1M109 88h1M109 154h1M109 444h1M109 510h1M110 87h1M110 153h1M110 445h1M110 511h1M111 86h1M111 177h1M111 421h1M111 512h1M112 85h1M112 150h1M112 191h1M112 448h1M112 513h1M113 149h1M113 174h1M113 424h1M113 449h1M114 148h1M114 450h1M115 83h1M115 171h1M115 427h1M115 515h1M116 82h1M116 145h1M116 170h1M116 428h1M116 453h1M116 516h1M117 81h1M117 144h1M117 194h1M117 454h1M117 517h1M118 80h1M118 143h1M118 167h1M118 431h1M118 455h1M118 518h1M119 142h1M119 166h1M119 432h1M119 456h1M120 141h1M120 457h1M121 78h1M121 163h1M121 435h1M121 520h1M122 77h1M122 138h1M122 162h1M122 379h1M122 436h1M122 460h1M122 521h1M123 76h1M123 137h1M123 461h1M123 522h1M124 136h1M124 159h1M124 198h1M124 439h1M124 462h1M125 135h1M125 158h1M125 440h1M125 463h1M126 74h1M126 134h1M126 157h1M126 441h1M126 464h1M126 524h1M127 73h1M127 133h1M127 465h1M127 525h1M128 132h1M128 154h1M128 444h1M128 466h1M129 131h1M129 153h1M129 445h1M129 467h1M130 71h1M130 130h1M130 152h1M130 446h1M130 468h1M130 527h1M131 70h1M131 129h1M131 151h1M131 202h1M131 396h1M131 447h1M131 469h1M131 528h1M132 128h1M132 150h1M132 448h1M132 470h1M133 127h1M133 149h1M133 449h1M133 471h1M134 68h1M134 126h1M134 197h1M134 401h1M134 472h1M134 530h1M135 67h1M135 125h1M135 146h1M135 452h1M135 473h1M135 531h1M136 124h1M136 145h1M136 194h1M136 404h1M136 453h1M136 474h1M137 123h1M137 144h1M137 454h1M137 475h1M138 65h1M138 122h1M138 143h1M138 191h1M138 407h1M138 455h1M138 476h1M138 533h1M139 142h1M139 456h1M140 141h1M140 188h1M140 410h1M140 457h1M141 63h1M141 120h1M141 140h1M141 458h1M141 478h1M141 535h1M142 119h1M142 139h1M142 185h1M142 413h1M142 459h1M142 479h1M143 118h1M143 138h1M143 184h1M143 414h1M143 460h1M143 480h1M144 61h1M144 117h1M144 137h1M144 461h1M144 481h1M144 537h1M145 116h1M145 136h1M145 181h1M145 417h1M145 462h1M145 482h1M146 135h1M146 180h1M146 418h1M146 463h1M147 59h1M147 539h1M148 114h1M148 177h1M148 421h1M148 484h1M149 62h1M149 113h1M149 133h1M149 176h1M149 422h1M149 465h1M149 485h1M150 112h1M150 132h1M150 175h1M150 423h1M150 466h1M150 486h1M151 131h1M151 467h1M152 56h1M152 67h1M152 130h1M152 172h1M152 426h1M152 468h1M152 542h1M153 110h1M153 129h1M153 171h1M153 427h1M153 469h1M153 488h1M154 70h1M154 109h1M154 128h1M154 170h1M154 428h1M154 470h1M154 489h1M155 169h1M155 429h1M156 168h1M156 430h1M157 53h1M157 75h1M157 107h1M157 126h1M157 167h1M157 431h1M157 472h1M157 491h1M157 545h1M158 106h1M158 125h1M158 166h1M158 432h1M158 473h1M158 492h1M159 78h1M159 124h1M159 165h1M159 433h1M159 474h1M160 164h1M160 434h1M161 81h1M161 104h1M161 163h1M161 435h1M161 474h1M161 494h1M162 103h1M162 122h1M162 162h1M162 436h1M162 476h1M162 495h1M163 121h1M163 161h1M163 437h1M163 471h1M163 477h1M164 86h1M164 160h1M164 438h1M164 470h1M165 101h1M165 159h1M165 439h1M165 469h1M165 497h1M166 89h1M166 119h1M166 158h1M166 440h1M166 468h1M166 479h1M167 118h1M167 157h1M167 441h1M167 480h1M168 99h1M168 156h1M168 442h1M168 465h1M168 499h1M168 549h1M169 94h1M169 155h1M169 443h1M169 464h1M170 46h1M170 116h1M170 154h1M170 444h1M170 463h1M170 482h1M170 552h1M171 115h1M171 153h1M171 445h1M171 462h1M171 483h1M172 152h1M172 446h1M173 96h1M173 459h1M173 502h1M174 113h1M174 458h1M174 485h1M175 150h1M175 448h1M175 457h1M176 94h1M176 149h1M176 449h1M176 456h1M176 504h1M177 111h1M177 148h1M177 450h1M177 487h1M178 453h1M178 530h1M180 146h1M181 145h1M181 453h1M182 108h1M182 490h1M183 90h1M183 508h1M184 143h1M184 455h1M185 142h1M185 456h1M187 105h1M187 493h1M188 140h1M188 458h1M191 138h1M191 460h1M194 136h1M194 462h1M197 134h1M197 464h1M202 131h1M202 467h1M203 113h1M395 485h1M396 131h1M396 467h1M401 134h1M401 464h1M404 136h1M404 462h1M407 138h1M407 460h1M410 140h1M410 458h1M411 105h1M411 493h1M413 142h1M413 456h1M414 143h1M414 455h1M415 90h1M415 508h1M416 108h1M416 490h1M417 145h1M417 453h1M418 452h1M420 145h1M421 66h1M421 111h1M421 148h1M421 450h1M421 487h1M422 94h1M422 142h1M422 149h1M422 449h1M422 504h1M423 141h1M423 150h1M423 448h1M424 113h1M424 140h1M424 485h1M425 96h1M425 139h1M425 502h1M426 152h1M426 446h1M427 115h1M427 136h1M427 153h1M427 445h1M427 483h1M428 46h1M428 116h1M428 135h1M428 154h1M428 444h1M428 482h1M428 552h1M429 134h1M429 155h1M429 443h1M429 504h1M430 49h1M430 99h1M430 133h1M430 156h1M430 442h1M430 499h1M431 118h1M431 157h1M431 441h1M431 480h1M432 119h1M432 130h1M432 158h1M432 440h1M432 479h1M432 509h1M433 101h1M433 129h1M433 159h1M433 439h1M433 497h1M434 128h1M434 160h1M434 438h1M434 512h1M435 121h1M435 127h1M435 161h1M435 437h1M435 477h1M436 103h1M436 122h1M436 162h1M436 436h1M436 476h1M436 495h1M437 104h1M437 124h1M437 163h1M437 435h1M437 494h1M437 517h1M438 164h1M438 434h1M439 124h1M439 165h1M439 433h1M439 474h1M439 520h1M440 106h1M440 125h1M440 166h1M440 432h1M440 473h1M440 492h1M441 53h1M441 107h1M441 126h1M441 167h1M441 431h1M441 472h1M441 491h1M441 523h1M441 545h1M442 168h1M442 430h1M443 169h1M443 429h1M444 109h1M444 128h1M444 170h1M444 428h1M444 470h1M444 489h1M444 528h1M445 110h1M445 129h1M445 171h1M445 427h1M445 469h1M445 488h1M446 56h1M446 130h1M446 172h1M446 426h1M446 468h1M446 531h1M446 542h1M447 131h1M447 467h1M448 112h1M448 132h1M448 175h1M448 423h1M448 466h1M448 486h1M449 113h1M449 133h1M449 176h1M449 422h1M449 465h1M449 485h1M449 536h1M450 114h1M450 177h1M450 421h1M450 484h1M451 59h1M451 539h1M452 135h1M452 180h1M452 418h1M452 463h1M453 116h1M453 136h1M453 181h1M453 417h1M453 462h1M453 482h1M454 61h1M454 117h1M454 137h1M454 461h1M454 481h1M454 537h1M455 118h1M455 138h1M455 184h1M455 414h1M455 460h1M455 480h1M456 119h1M456 139h1M456 185h1M456 413h1M456 459h1M456 479h1M457 63h1M457 120h1M457 140h1M457 458h1M457 478h1M457 535h1M458 141h1M458 188h1M458 410h1M458 457h1M459 142h1M459 456h1M460 65h1M460 122h1M460 143h1M460 191h1M460 407h1M460 455h1M460 476h1M460 533h1M461 123h1M461 144h1M461 454h1M461 475h1M462 124h1M462 145h1M462 194h1M462 404h1M462 453h1M462 474h1M463 67h1M463 125h1M463 146h1M463 452h1M463 473h1M463 531h1M464 68h1M464 126h1M464 197h1M464 401h1M464 472h1M464 530h1M465 127h1M465 149h1M465 449h1M465 471h1M466 128h1M466 150h1M466 448h1M466 470h1M467 70h1M467 129h1M467 151h1M467 202h1M467 396h1M467 447h1M467 469h1M467 528h1M468 71h1M468 130h1M468 152h1M468 446h1M468 468h1M468 527h1M469 131h1M469 153h1M469 445h1M469 467h1M470 132h1M470 154h1M470 444h1M470 466h1M471 73h1M471 133h1M471 465h1M471 525h1M472 74h1M472 134h1M472 157h1M472 441h1M472 464h1M472 524h1M473 135h1M473 158h1M473 440h1M473 463h1M474 136h1M474 159h1M474 400h1M474 439h1M474 462h1M475 76h1M475 137h1M475 461h1M475 522h1M476 77h1M476 138h1M476 162h1M476 219h1M476 436h1M476 460h1M476 521h1M477 78h1M477 163h1M477 435h1M477 520h1M478 141h1M478 457h1M479 142h1M479 166h1M479 403h1M479 432h1M479 456h1M480 80h1M480 143h1M480 167h1M480 431h1M480 455h1M480 518h1M481 81h1M481 144h1M481 454h1M481 517h1M482 82h1M482 145h1M482 170h1M482 428h1M482 453h1M482 516h1M483 83h1M483 171h1M483 427h1M483 515h1M484 148h1M484 450h1M485 149h1M485 174h1M485 424h1M485 449h1M486 85h1M486 150h1M486 407h1M486 448h1M486 513h1M487 86h1M487 177h1M487 421h1M487 512h1M488 87h1M488 153h1M488 445h1M488 511h1M489 88h1M489 154h1M489 444h1M489 510h1M490 89h1M490 182h1M490 416h1M490 509h1M491 90h1M491 157h1M491 441h1M491 508h1M492 91h1M492 158h1M492 440h1M492 507h1M493 92h1M493 187h1M493 411h1M493 506h1M494 161h1M494 437h1M495 162h1M495 436h1M496 94h1M496 504h1M497 95h1M497 165h1M497 433h1M497 503h1M498 96h1M498 502h1M499 97h1M499 168h1M499 430h1M499 501h1M500 98h1M500 500h1M501 99h1M501 499h1M502 100h1M502 173h1M502 425h1M502 498h1M503 101h1M503 497h1M504 102h1M504 169h1M504 176h1M504 209h1M504 422h1M504 496h1M506 105h1M506 493h1M507 106h1M507 492h1M508 107h1M508 183h1M508 415h1M508 491h1M509 108h1M509 166h1M509 490h1M510 109h1M510 489h1M511 110h1M511 488h1M512 111h1M512 164h1M512 487h1M513 112h1M513 486h1M515 115h1M515 483h1M516 116h1M516 482h1M517 117h1M517 161h1M517 481h1M518 118h1M518 480h1M520 121h1M520 159h1M520 477h1M521 122h1M521 476h1M522 123h1M522 475h1M523 157h1M524 126h1M524 472h1M525 127h1M525 471h1M527 130h1M527 468h1M528 131h1M528 154h1M528 467h1M530 134h1M530 420h1M530 464h1M531 135h1M531 152h1M531 463h1M533 138h1M533 460h1M535 141h1M535 457h1M536 149h1M537 144h1M537 454h1M539 147h1M539 451h1M542 152h1M542 446h1M545 157h1M545 441h1M550 432h1M551 429h1M552 170h1M552 428h1" stroke="#fff" transform="translate(-.5 0)" class="p"/><path d="M15 283v27M15 311v5M16 270v13M16 316v13M17 262v8M17 329v8M18 255v7M18 337v7M19 249v6M19 344v6M20 244v5M20 350v5M21 239v5M21 355v5M22 235v4M22 360v4M23 231v4M23 364v4M24 227v4M24 368v4M25 223v4M25 372v4M26 220v3M26 376v3M27 216v4M27 379v4M28 213v3M28 383v3M29 210v3M29 386v3M30 207v3M30 389v3M31 204v3M31 392v3M32 201v3M32 395v3M33 199v2M33 398v2M34 196v3M34 400v3M35 194v2M35 403v2M36 191v3M36 405v3M37 189v2M37 408v2M38 186v3M38 410v3M39 184v2M39 413v2M40 182v2M40 415v2M41 180v2M41 417v2M42 178v2M42 419v2M43 176v2M43 421v2M44 173v3M44 423v3M45 171v2M45 426v2M47 429v2M48 431v2M49 164v2M49 433v2M50 162v2M50 435v2M51 160v2M51 437v2M52 158v2M52 439v2M54 155v2M54 442v2M55 153v2M55 444v2M57 150v2M57 447v2M58 148v2M58 449v2M60 145v2M60 284v24M60 309v6M60 452v2M61 273v11M61 315v11M62 142v2M62 265v8M62 326v8M62 455v2M63 259v6M63 334v6M64 139v2M64 253v6M64 340v6M64 458v2M65 249v4M65 346v4M66 136v2M66 244v5M66 350v5M66 461v2M67 240v4M67 355v4M68 236v4M68 359v4M69 132v2M69 233v3M69 363v3M69 465v2M70 229v4M70 366v4M71 226v3M71 370v3M72 128v2M72 223v3M72 373v3M72 469v2M73 220v3M73 376v3M74 218v2M74 379v2M75 124v2M75 215v3M75 285v14M75 300v14M75 381v3M75 473v2M76 212v3M76 274v11M76 314v11M76 384v3M77 210v2M77 266v8M77 325v8M77 387v2M78 207v3M78 260v6M78 333v6M78 389v3M79 119v2M79 205v2M79 255v5M79 339v5M79 392v2M79 478v2M80 203v2M80 250v5M80 344v5M80 394v2M81 200v3M81 246v4M81 349v4M81 396v3M82 198v2M82 242v4M82 353v4M82 399v2M83 196v2M83 238v4M83 357v4M83 401v2M84 113v2M84 194v2M84 235v3M84 361v3M84 403v2M84 484v2M85 192v2M85 232v3M85 364v3M85 405v2M86 190v2M86 229v3M86 367v3M86 407v2M87 188v2M87 226v3M87 370v3M87 409v2M88 186v2M88 223v3M88 373v3M88 411v2M89 184v2M89 220v3M89 376v3M89 413v2M90 218v2M90 379v2M91 181v2M91 215v3M91 381v3M91 416v2M92 179v2M92 213v2M92 384v2M92 418v2M93 103v2M93 177v2M93 210v3M93 386v3M93 420v2M93 494v2M94 208v2M95 174v2M95 206v2M95 391v2M95 423v2M96 204v2M96 393v2M97 171v2M97 202v2M97 395v2M97 426v2M98 169v2M98 200v2M98 397v2M98 428v2M99 198v2M99 399v2M100 166v2M100 196v2M100 401v2M100 431v2M101 194v2M101 403v2M102 163v2M102 192v2M102 405v2M102 434v2M103 190v2M103 407v2M104 188v2M104 409v2M105 159v2M105 286v13M105 300v13M105 438v2M106 185v2M106 275v11M106 313v11M106 412v2M107 183v2M107 268v7M107 324v7M107 414v2M108 155v2M108 263v5M108 331v5M108 442v2M109 180v2M109 258v5M109 336v5M109 417v2M110 178v2M110 254v4M110 341v4M110 419v2M111 151v2M111 250v4M111 345v4M111 446v2M112 175v2M112 246v4M112 349v4M112 422v2M113 243v3M113 353v3M114 172v2M114 240v3M114 356v3M114 425v2M115 146v2M115 237v3M115 359v3M115 451v2M116 234v3M116 362v3M117 168v2M117 231v3M117 365v3M117 429v2M118 228v3M118 368v3M119 226v2M119 371v2M120 164v2M120 224v2M120 373v2M120 433v2M121 139v2M121 221v3M121 375v3M121 458v2M122 219v2M123 160v2M123 217v2M123 380v2M123 437v2M124 215v2M124 382v2M125 213v2M125 384v2M126 211v2M126 386v2M127 155v2M127 209v2M127 388v2M127 442v2M128 207v2M128 390v2M129 205v2M129 392v2M130 203v2M130 394v2M132 200v2M132 397v2M133 198v2M133 399v2M134 147v2M134 450v2M135 195v2M135 402v2M137 192v2M137 405v2M139 189v2M139 408v2M141 186v2M141 411v2M144 182v2M144 415v2M147 178v2M147 419v2M148 60v2M150 63v2M151 65v2M151 173v2M151 424v2M153 68v2M155 71v2M156 73v2M158 76v2M160 79v2M162 82v2M162 472v2M163 84v2M165 87v2M167 90v2M167 466v2M168 92v2M169 547v2M170 95v2M170 545v2M171 543v2M172 460v2M172 541v2M173 539v2M174 537v2M175 535v2M176 533v2M177 454v2M177 531v2M179 528v2M180 526v2M181 524v2M182 522v2M183 520v2M184 518v2M185 516v2M186 514v2M187 512v2M197 101v2M198 103v2M199 105v2M200 107v2M201 109v2M202 111v2M204 114v2M205 116v2M206 118v2M207 120v2M208 122v2M209 124v2M274 519v2M275 511v8M276 504v7M277 496v8M278 493v3M288 16v11M289 27v22M290 49v11M308 539v11M309 550v22M310 572v11M320 103v3M321 95v8M322 88v7M323 80v8M324 78v2M389 473v2M390 475v2M391 477v2M392 479v2M393 481v2M394 483v2M396 486v2M397 488v2M398 490v2M399 492v2M400 494v2M401 496v2M411 85v2M412 83v2M413 81v2M414 79v2M415 77v2M416 75v2M417 73v2M418 71v2M419 69v2M420 67v2M421 143v2M422 64v2M423 62v2M424 60v2M425 58v2M426 56v2M426 137v2M427 54v2M428 52v2M428 502v2M429 50v2M430 505v2M431 131v2M431 507v2M433 510v2M435 513v2M436 125v2M436 515v2M438 518v2M440 521v2M442 524v2M443 526v2M445 529v2M447 173v2M447 424v2M447 532v2M448 534v2M450 537v2M451 178v2M451 419v2M454 182v2M454 415v2M457 186v2M457 411v2M459 189v2M459 408v2M461 192v2M461 405v2M463 195v2M463 402v2M464 147v2M464 450v2M465 198v2M465 399v2M466 200v2M466 397v2M468 203v2M468 394v2M469 205v2M469 392v2M470 207v2M470 390v2M471 155v2M471 209v2M471 388v2M471 442v2M472 211v2M472 386v2M473 213v2M473 384v2M474 215v2M474 382v2M475 160v2M475 217v2M475 380v2M475 437v2M476 378v2M477 139v2M477 221v3M477 375v3M477 458v2M478 164v2M478 224v2M478 373v2M478 433v2M479 226v2M479 371v2M480 228v3M480 368v3M481 168v2M481 231v3M481 365v3M481 429v2M482 234v3M482 362v3M483 146v2M483 237v3M483 359v3M483 451v2M484 172v2M484 240v3M484 356v3M484 425v2M485 243v3M485 353v3M486 175v2M486 246v4M486 349v4M486 422v2M487 151v2M487 250v4M487 345v4M487 446v2M488 178v2M488 254v4M488 341v4M488 419v2M489 180v2M489 258v5M489 336v5M489 417v2M490 155v2M490 263v5M490 331v5M490 442v2M491 183v2M491 268v7M491 324v7M491 414v2M492 185v2M492 275v11M492 313v11M492 412v2M493 159v2M493 286v13M493 300v13M493 438v2M494 188v2M494 409v2M495 190v2M495 407v2M496 163v2M496 192v2M496 405v2M496 434v2M497 194v2M497 403v2M498 166v2M498 196v2M498 401v2M498 431v2M499 198v2M499 399v2M500 169v2M500 200v2M500 397v2M500 428v2M501 171v2M501 202v2M501 395v2M501 426v2M502 204v2M502 393v2M503 174v2M503 206v2M503 391v2M503 423v2M504 389v2M505 103v2M505 177v2M505 210v3M505 386v3M505 420v2M505 494v2M506 179v2M506 213v2M506 384v2M506 418v2M507 181v2M507 215v3M507 381v3M507 416v2M508 218v2M508 379v2M509 184v2M509 220v3M509 376v3M509 413v2M510 186v2M510 223v3M510 373v3M510 411v2M511 188v2M511 226v3M511 370v3M511 409v2M512 190v2M512 229v3M512 367v3M512 407v2M513 192v2M513 232v3M513 364v3M513 405v2M514 113v2M514 194v2M514 235v3M514 361v3M514 403v2M514 484v2M515 196v2M515 238v4M515 357v4M515 401v2M516 198v2M516 242v4M516 353v4M516 399v2M517 200v3M517 246v4M517 349v4M517 396v3M518 203v2M518 250v5M518 344v5M518 394v2M519 119v2M519 205v2M519 255v5M519 339v5M519 392v2M519 478v2M520 207v3M520 260v6M520 333v6M520 389v3M521 210v2M521 266v8M521 325v8M521 387v2M522 212v3M522 274v11M522 314v11M522 384v3M523 124v2M523 215v3M523 285v14M523 300v14M523 381v3M523 473v2M524 218v2M524 379v2M525 220v3M525 376v3M526 128v2M526 223v3M526 373v3M526 469v2M527 226v3M527 370v3M528 229v4M528 366v4M529 132v2M529 233v3M529 363v3M529 465v2M530 236v4M530 359v4M531 240v4M531 355v4M532 136v2M532 244v5M532 350v5M532 461v2M533 249v4M533 346v4M534 139v2M534 253v6M534 340v6M534 458v2M535 259v6M535 334v6M536 142v2M536 265v8M536 326v8M536 455v2M537 273v11M537 315v11M538 145v2M538 284v6M538 291v24M538 452v2M540 148v2M540 449v2M541 150v2M541 447v2M543 153v2M543 444v2M544 155v2M544 442v2M546 158v2M546 439v2M547 160v2M547 437v2M548 162v2M548 435v2M549 164v2M549 433v2M550 166v2M551 168v2M553 171v2M553 426v2M554 173v3M554 423v3M555 176v2M555 421v2M556 178v2M556 419v2M557 180v2M557 417v2M558 182v2M558 415v2M559 184v2M559 413v2M560 186v3M560 410v3M561 189v2M561 408v2M562 191v3M562 405v3M563 194v2M563 403v2M564 196v3M564 400v3M565 199v2M565 398v2M566 201v3M566 395v3M567 204v3M567 392v3M568 207v3M568 389v3M569 210v3M569 386v3M570 213v3M570 383v3M571 216v4M571 379v4M572 220v3M572 376v3M573 223v4M573 372v4M574 227v4M574 368v4M575 231v4M575 364v4M576 235v4M576 360v4M577 239v5M577 355v5M578 244v5M578 350v5M579 249v6M579 344v6M580 255v7M580 337v7M581 262v8M581 329v8M582 270v13M582 316v13M583 283v5M583 289v27" stroke="#fff" transform="translate(0 -.5)" class="p"/>
<path d="M123 378h1M125 377h1M127 376h1M129 375h1M131 202h1M131 374h1M133 203h1M133 373h1M135 204h1M135 372h1M137 205h1M137 371h1M139 207h1M139 370h1M141 208h1M141 370h1M143 209h1M143 369h1M145 210h1M145 368h1M147 211h1M147 367h1M149 212h1M149 366h1M151 214h1M151 365h1M153 215h1M153 364h1M155 216h1M155 363h1M157 217h1M157 362h1M159 218h1M159 361h1M161 219h1M161 361h1M163 220h1M163 360h1M165 222h1M165 359h1M167 223h1M167 358h1M169 224h1M169 357h1M171 225h1M171 356h1M173 226h1M173 355h1M175 227h1M175 354h1M177 229h1M177 353h1M179 230h1M179 353h1M180 451h1M181 231h1M181 352h1M181 449h1M183 232h1M183 351h1M183 447h1M184 445h1M185 233h1M185 350h1M186 443h1M187 234h1M187 349h1M188 441h1M189 235h1M189 348h1M189 439h1M191 237h1M191 347h1M191 437h1M192 435h1M193 238h1M193 346h1M194 433h1M195 239h1M195 345h1M195 431h1M197 240h1M197 345h1M197 429h1M199 241h1M199 344h1M199 427h1M200 425h1M201 242h1M201 343h1M202 423h1M203 244h1M203 342h1M203 421h1M205 245h1M205 341h1M205 419h1M206 417h1M207 246h1M207 340h1M208 415h1M209 247h1M209 339h1M210 413h1M211 127h1M211 248h1M211 338h1M211 411h1M212 129h1M213 131h1M213 249h1M213 337h1M213 409h1M214 133h1M214 407h1M215 135h1M215 251h1M215 336h1M216 137h1M216 405h1M217 139h1M217 252h1M217 336h1M217 403h1M218 141h1M219 143h1M219 253h1M219 335h1M219 401h1M220 145h1M221 147h1M221 254h1M221 334h1M221 399h1M222 149h1M222 397h1M223 151h1M223 255h1M223 333h1M224 153h1M224 395h1M225 155h1M225 256h1M225 332h1M225 393h1M226 157h1M227 159h1M227 257h1M227 331h1M227 391h1M228 161h1M228 389h1M229 163h1M229 259h1M229 330h1M230 165h1M230 387h1M231 167h1M231 260h1M231 329h1M232 169h1M232 385h1M233 171h1M233 261h1M233 328h1M233 383h1M234 173h1M235 175h1M235 262h1M235 328h1M235 381h1M236 177h1M236 379h1M237 179h1M237 263h1M237 327h1M238 181h1M238 377h1M239 183h1M239 264h1M239 326h1M239 375h1M240 185h1M241 187h1M241 266h1M241 325h1M241 373h1M242 189h1M243 191h1M243 267h1M243 324h1M243 371h1M244 193h1M244 369h1M245 195h1M245 268h1M245 323h1M246 367h1M247 197h1M247 269h1M247 322h1M247 365h1M248 199h1M249 201h1M249 270h1M249 321h1M249 363h1M250 203h1M250 361h1M251 205h1M251 271h1M251 320h1M252 207h1M252 359h1M253 209h1M253 272h1M253 320h1M254 211h1M254 357h1M255 213h1M255 274h1M255 319h1M255 355h1M256 215h1M257 217h1M257 275h1M257 318h1M257 353h1M258 219h1M258 351h1M259 221h1M259 276h1M259 317h1M260 223h1M260 349h1M261 225h1M261 277h1M261 316h1M261 347h1M262 227h1M263 229h1M263 278h1M263 315h1M263 345h1M264 231h1M264 343h1M265 233h1M265 279h1M265 314h1M266 235h1M266 341h1M267 237h1M267 281h1M267 313h1M268 239h1M268 339h1M269 241h1M269 282h1M269 312h1M269 337h1M270 243h1M271 245h1M271 283h1M271 311h1M271 335h1M272 247h1M272 333h1M273 249h1M273 284h1M273 311h1M274 251h1M274 331h1M275 253h1M275 285h1M275 310h1M275 329h1M276 255h1M277 257h1M277 286h1M277 309h1M277 327h1M278 259h1M279 261h1M279 287h1M279 308h1M279 325h1M280 263h1M280 323h1M281 289h1M281 307h1M282 265h1M282 321h1M283 267h1M283 290h1M283 306h1M283 319h1M284 269h1M285 271h1M285 291h1M285 305h1M285 317h1M286 273h1M286 315h1M287 275h1M287 292h1M287 304h1M288 277h1M288 313h1M289 279h1M289 293h1M289 303h1M290 281h1M290 311h1M291 283h1M291 294h1M291 303h1M291 309h1M292 285h1M293 287h1M293 296h1M293 302h1M293 307h1M294 289h1M294 305h1M295 291h1M295 297h1M295 301h1M296 293h1M296 303h1M297 295h1M297 298h1M298 297h1M299 299h1M300 301h1M301 300h1M301 303h1M302 295h1M302 305h1M303 297h1M303 301h1M303 307h1M304 293h1M304 309h1M305 291h1M305 296h1M305 302h1M305 311h1M306 313h1M307 289h1M307 295h1M307 304h1M307 315h1M308 287h1M308 317h1M309 295h1M309 305h1M309 319h1M310 285h1M310 321h1M311 294h1M311 306h1M311 323h1M312 283h1M312 325h1M313 281h1M313 293h1M313 307h1M313 327h1M314 329h1M315 279h1M315 292h1M315 308h1M315 331h1M316 277h1M316 333h1M317 291h1M317 309h1M318 275h1M318 335h1M319 273h1M319 290h1M319 311h1M319 337h1M320 339h1M321 271h1M321 289h1M321 312h1M321 341h1M322 343h1M323 269h1M323 288h1M323 313h1M323 345h1M324 267h1M324 347h1M325 287h1M325 314h1M325 349h1M326 265h1M326 351h1M327 263h1M327 287h1M327 315h1M327 353h1M328 355h1M329 261h1M329 286h1M329 316h1M329 357h1M330 259h1M330 359h1M331 285h1M331 317h1M331 361h1M332 257h1M332 363h1M333 284h1M333 319h1M333 365h1M334 255h1M334 367h1M335 253h1M335 283h1M335 320h1M335 369h1M336 371h1M337 251h1M337 282h1M337 321h1M337 373h1M338 249h1M338 375h1M339 281h1M339 322h1M339 377h1M340 247h1M340 379h1M341 245h1M341 280h1M341 323h1M341 381h1M342 383h1M343 243h1M343 279h1M343 324h1M343 385h1M344 241h1M344 387h1M345 278h1M345 326h1M345 389h1M346 239h1M346 391h1M347 278h1M347 327h1M347 393h1M348 237h1M348 395h1M349 235h1M349 277h1M349 328h1M349 397h1M350 399h1M351 233h1M351 276h1M351 329h1M351 401h1M352 231h1M353 275h1M353 330h1M353 403h1M354 229h1M354 405h1M355 227h1M355 274h1M355 331h1M355 407h1M356 409h1M357 225h1M357 273h1M357 332h1M357 411h1M358 413h1M359 223h1M359 272h1M359 334h1M359 415h1M360 221h1M360 417h1M361 271h1M361 335h1M361 419h1M362 219h1M362 421h1M363 217h1M363 270h1M363 336h1M363 423h1M364 425h1M365 215h1M365 270h1M365 337h1M365 427h1M366 213h1M366 429h1M367 269h1M367 338h1M367 431h1M368 211h1M368 433h1M369 268h1M369 339h1M369 435h1M370 209h1M370 437h1M371 207h1M371 267h1M371 341h1M371 439h1M372 441h1M373 205h1M373 266h1M373 342h1M373 443h1M374 203h1M374 445h1M375 265h1M375 343h1M375 447h1M376 201h1M376 449h1M377 199h1M377 264h1M377 344h1M377 451h1M378 453h1M379 197h1M379 263h1M379 345h1M379 455h1M380 457h1M381 195h1M381 262h1M381 346h1M381 459h1M382 193h1M382 461h1M383 262h1M383 348h1M383 463h1M384 191h1M384 465h1M385 189h1M385 261h1M385 349h1M385 467h1M386 469h1M387 187h1M387 260h1M387 350h1M387 471h1M388 185h1M389 259h1M389 351h1M390 183h1M391 258h1M391 352h1M392 181h1M393 179h1M393 257h1M393 353h1M395 177h1M395 256h1M395 354h1M396 175h1M397 255h1M397 356h1M398 173h1M399 171h1M399 254h1M399 357h1M401 169h1M401 253h1M401 358h1M403 167h1M403 253h1M403 359h1M404 165h1M405 252h1M405 360h1M406 163h1M407 161h1M407 251h1M407 361h1M409 159h1M409 250h1M409 363h1M410 157h1M411 249h1M411 364h1M412 155h1M413 248h1M413 365h1M414 153h1M415 151h1M415 247h1M415 366h1M417 149h1M417 246h1M417 367h1M418 147h1M419 245h1M419 368h1M421 245h1M421 369h1M423 244h1M423 371h1M425 243h1M425 372h1M427 242h1M427 373h1M429 241h1M429 374h1M431 240h1M431 375h1M433 239h1M433 376h1M435 238h1M435 378h1M437 237h1M437 379h1M439 237h1M439 380h1M441 236h1M441 381h1M443 235h1M443 382h1M445 234h1M445 383h1M447 233h1M447 384h1M449 232h1M449 386h1M451 231h1M451 387h1M453 230h1M453 388h1M455 229h1M455 389h1M457 228h1M457 390h1M459 228h1M459 391h1M461 227h1M461 393h1M463 226h1M463 394h1M465 225h1M465 395h1M467 224h1M467 396h1M469 223h1M471 222h1M473 221h1M475 220h1" stroke="#7f7f7f" transform="translate(-.5 0)" class="p"/><path d="M297 300v2M301 297v2" stroke="#7f7f7f" transform="translate(0 -.5)" class="p"/>
<path d="M350 35h3M360 35h3M349 36h1M349 40h1M350 41h1M353 36h1M359 36h1M362 41h1M363 36h1M363 40h1" stroke="#f00" transform="translate(-.5 0)" class="p"/><path d="M348 37v3M354 37v3M355 40v4M356 44v8M357 40v4M358 37v3M364 37v3" stroke="#f00" transform="translate(0 -.5)" class="p"/>
<path d="M217 44h2M224 44h2M219 45h5M217 46h2M224 46h2M217 56h2M224 56h2M219 57h5M215 41h1M227 41h1" stroke="#ff0" transform="translate(-.5 0)" class="p"/><path d="M215 49v5M216 42v2M216 47v2M216 54v2M226 42v2M226 47v2M226 54v2M227 49v5" stroke="#ff0" transform="translate(0 -.5)" class="p"/>
<path d="M102 115h11M102 127h11M100 113h1M100 129h1M101 114h1M101 128h1M113 114h1M113 128h1M114 113h1M114 129h1" stroke="#0f0" transform="translate(-.5 0)" class="p"/><path d="M104 116v11M110 116v11" stroke="#0f0" transform="translate(0 -.5)" class="p"/>
<path d="M41 235h5M38 236h3M47 237h3M37 241h3M47 243h3M37 247h3M46 248h3M41 249h5M35 239h1M36 238h1M36 242h1M36 246h1M37 237h1M40 242h1M40 246h1M40 248h1M46 236h1M46 238h1M46 242h1M49 247h1M50 238h1M50 242h1M50 246h1M51 245h1" stroke="#00f" transform="translate(-.5 0)" class="p"/><path d="M35 243v3M41 243v3M45 239v3M51 239v3" stroke="#00f" transform="translate(0 -.5)" class="p"/>
<path d="M47 369h5M41 381h1M42 382h1M43 383h1M44 372h1M44 378h1M44 382h1M45 371h1M46 370h1M52 370h1M53 371h1M54 372h1M54 378h1M54 382h1M55 383h1M56 384h1M57 385h1" stroke="#f00" transform="translate(-.5 0)" class="p"/><path d="M43 373v5M45 379v3M53 379v3M55 373v5" stroke="#f00" transform="translate(0 -.5)" class="p"/>
<path d="M126 487h2M123 489h2M113 484h1M114 485h1M116 485h1M117 484h1M118 485h1M120 485h1M121 484h1M122 485h1M123 500h1M124 497h1M124 499h1M125 488h1M125 498h1M126 497h1M126 499h1M127 486h1M127 500h1" stroke="#ff0" transform="translate(-.5 0)" class="p"/><path d="M115 486v13M119 486v13M123 486v3M123 490v7M127 488v9" stroke="#ff0" transform="translate(0 -.5)" class="p"/>
<path d="M240 551h5M234 557h7M244 557h7M234 561h17M239 552h1M239 556h1M245 552h1M245 556h1" stroke="#0f0" transform="translate(-.5 0)" class="p"/><path d="M238 553v3M246 553v3" stroke="#0f0" transform="translate(0 -.5)" class="p"/>
<path d="M383 553h3M381 557h2M369 541h1M370 542h1M372 542h1M373 541h1M374 542h1M376 542h1M377 541h1M378 542h1M380 556h1M383 556h1M384 552h1" stroke="#00f" transform="translate(-.5 0)" class="p"/><path d="M371 543v13M375 543v13M379 543v13M384 554v2" stroke="#00f" transform="translate(0 -.5)" class="p"/>
<path d="M496 469h5M499 470h2M484 485h1M485 484h1M486 475h1M486 483h1M487 476h1M487 482h1M488 477h1M488 481h1M489 478h1M489 480h1M490 479h1M491 478h1M491 480h1M492 477h1M492 481h1M493 476h1M493 482h1M494 475h1M494 483h1M495 474h1M496 473h1M497 472h1M498 471h1" stroke="#f00" transform="translate(-.5 0)" class="p"/><path d="M500 471v3" stroke="#f00" transform="translate(0 -.5)" class="p"/>
<path d="M559 348h3M548 349h2M555 349h2M555 350h3M559 354h3M547 350h1M549 348h1M550 357h1M552 357h1M554 351h1M555 348h1M557 351h1M558 349h1M558 352h1M559 353h1M561 355h1M561 364h1M562 349h1M562 353h1M562 356h1M562 363h1" stroke="#ff0" transform="translate(-.5 0)" class="p"/><path d="M549 350v7M551 358v5M553 352v5M563 350v3M563 357v6" stroke="#ff0" transform="translate(0 -.5)" class="p"/>
<path d="M544 214h2M550 214h2M547 218h2M553 218h2M544 224h2M550 224h2M547 228h2M553 228h2M541 219h1M541 229h1M543 216h1M543 226h1M544 215h1M544 225h1M545 213h1M545 223h1M547 219h1M547 229h1M548 217h1M548 227h1M549 216h1M549 226h1M550 215h1M550 225h1M551 213h1M551 223h1M553 219h1M553 229h1M554 217h1M554 227h1M555 216h1M555 226h1M557 213h1M557 223h1" stroke="#0f0" transform="translate(-.5 0)" class="p"/><path d="M542 217v2M542 227v2M546 215v3M546 225v3M552 215v3M552 225v3M556 214v2M556 224v2" stroke="#0f0" transform="translate(0 -.5)" class="p"/>
<path d="M469 106h17M469 98h1M469 114h1M470 99h1M470 113h1M471 100h1M471 112h1M483 100h1M483 112h1M484 99h1M484 113h1M485 98h1M485 114h1" stroke="#00f" transform="translate(-.5 0)" class="p"/><path d="M472 101v2M472 110v2M473 103v3M473 107v3M481 103v3M481 107v3M482 101v2M482 110v2" stroke="#00f" transform="translate(0 -.5)" class="p"/>
<path d="M316 139v6M317 133v6" stroke="#fff" transform="translate(0 -.5)" class="p"/>
<path d="M315 150h1" stroke="#ff0" transform="translate(-.5 0)" class="p"/>
<path d="M131 299h13" stroke="#fff" transform="translate(-.5 0)" class="p"/>
<path d="M149 299h1" stroke="#f00" transform="translate(-.5 0)" class="p"/>
<path d="M454 305h6M460 306h7" stroke="#7f7f7f" transform="translate(-.5 0)" class="p"/>
<path d="M477 298h5M473 310h3M483 310h3M471 312h1M472 311h1M472 313h1M473 314h1M474 301h1M474 307h1M474 313h1M475 300h1M476 299h1M482 299h1M483 300h1M484 301h1M484 307h1M484 313h1M485 314h1M486 311h1M486 313h1M487 312h1" stroke="#007f7f" transform="translate(-.5 0)" class="p"/><path d="M473 302v5M475 308v2M475 311v2M483 308v2M483 311v2M485 302v5" stroke="#007f7f" transform="translate(0 -.5)" class="p"/>
<path d="M448 305h1" stroke="#007f7f" transform="translate(-.5 0)" class="p"/>
<path d="M438 368h2M440 369h2M442 370h2M444 371h2M446 372h2M448 373h2" stroke="#fff" transform="translate(-.5 0)" class="p"/>
<path d="M459 371h3M459 375h3M456 378h2M463 378h2M458 379h5M456 383h9" stroke="#00f" transform="translate(-.5 0)" class="p"/><path d="M454 371v5M455 376v2M458 372v3M460 380v3M460 384v4M462 372v3M465 376v2M466 371v5" stroke="#00f" transform="translate(0 -.5)" class="p"/>
<path d="M433 365h1" stroke="#00f" transform="translate(-.5 0)" class="p"/>
<path d="M448 226h2M446 227h2M444 228h2M442 229h2M440 230h2M439 231h1" stroke="#7f7f7f" transform="translate(-.5 0)" class="p"/>
<path d="M453 214h3M458 214h5M465 214h3M456 219h2M463 219h2M458 220h5M456 224h9" stroke="#00f" transform="translate(-.5 0)" class="p"/><path d="M454 212v2M454 215v2M455 217v2M460 212v2M460 215v5M460 221v3M460 225v4M465 217v2M466 212v2M466 215v2" stroke="#00f" transform="translate(0 -.5)" class="p"/>
<path d="M433 234h1" stroke="#00f" transform="translate(-.5 0)" class="p"/>
<path d="M387 171h1M390 166h1M393 161h1" stroke="#7f7f7f" transform="translate(-.5 0)" class="p"/><path d="M388 169v2M389 167v2M391 164v2M392 162v2" stroke="#7f7f7f" transform="translate(0 -.5)" class="p"/>
<path d="M396 149h9M399 155h3M399 159h3M394 143h1M394 153h1M395 144h1M395 152h1M405 144h1M405 152h1M406 143h1M406 153h1" stroke="#0f0" transform="translate(-.5 0)" class="p"/><path d="M396 145v4M396 150v2M398 156v3M400 147v2M400 150v5M402 156v3M404 145v4M404 150v2" stroke="#0f0" transform="translate(0 -.5)" class="p"/>
<path d="M383 176h1" stroke="#0f0" transform="translate(-.5 0)" class="p"/>
<path d="M220 447h1M226 436h1" stroke="#fff" transform="translate(-.5 0)" class="p"/><path d="M221 445v2M222 443v2M223 441v2M224 439v2M225 437v2" stroke="#fff" transform="translate(0 -.5)" class="p"/>
<path d="M209 452h9M217 456h3M213 458h3M216 457h1M220 457h1M220 461h1M220 465h1M221 466h1" stroke="#ff0" transform="translate(-.5 0)" class="p"/><path d="M213 450v2M213 453v5M213 459v6M219 462v3M221 458v3" stroke="#ff0" transform="translate(0 -.5)" class="p"/>
<path d="M229 431h1" stroke="#ff0" transform="translate(-.5 0)" class="p"/>
<path d="M456 242h2M454 243h2M451 244h3M449 245h2M447 246h2M445 247h2" stroke="#fff" transform="translate(-.5 0)" class="p"/>
<path d="M463 232h2M462 244h15M462 243h1M465 233h1M473 231h1M474 230h1" stroke="#f00" transform="translate(-.5 0)" class="p"/><path d="M463 241v2M464 239v2M465 237v2M466 234v3M472 232v12M472 245v2" stroke="#f00" transform="translate(0 -.5)" class="p"/>
<path d="M440 249h1" stroke="#f00" transform="translate(-.5 0)" class="p"/>
<path d="M139 318h7M133 319h6" stroke="#fff" transform="translate(-.5 0)" class="p"/>
<path d="M124 313h6M128 314h2M116 319h5M121 320h2M116 329h5M114 321h1M114 327h1M115 320h1M115 328h1M121 328h1M122 321h1M122 327h1M123 319h1M124 318h1M125 317h1M126 316h1M127 315h1" stroke="#f00" transform="translate(-.5 0)" class="p"/><path d="M113 322v5M123 322v5M129 315v4" stroke="#f00" transform="translate(0 -.5)" class="p"/>
<path d="M151 317h1" stroke="#f00" transform="translate(-.5 0)" class="p"/>
<path d="M261 460v3M262 456v4M263 452v4M264 450v2" stroke="#fff" transform="translate(0 -.5)" class="p"/>
<path d="M257 466h5M257 474h5M255 478h9M256 467h1M256 473h1M262 467h1M262 473h1" stroke="#0f0" transform="translate(-.5 0)" class="p"/><path d="M255 468v5M259 475v3M259 479v4M263 468v5" stroke="#0f0" transform="translate(0 -.5)" class="p"/>
<path d="M265 445h1" stroke="#0f0" transform="translate(-.5 0)" class="p"/>
<path d="M297 460v7M298 454v6" stroke="#fff" transform="translate(0 -.5)" class="p"/>
<path d="M295 473h5M295 481h5M293 485h9M293 471h1M294 472h1M294 474h1M294 480h1M300 472h1M300 474h1M300 480h1M301 471h1" stroke="#0f0" transform="translate(-.5 0)" class="p"/><path d="M293 475v5M297 482v3M297 486v2M301 475v5" stroke="#0f0" transform="translate(0 -.5)" class="p"/>
<path d="M298 448h1" stroke="#0f0" transform="translate(-.5 0)" class="p"/>
<path d="M461 264h3M457 265h4M453 266h4M451 267h2" stroke="#fff" transform="translate(-.5 0)" class="p"/>
<path d="M471 254h5M476 255h2M476 269h2M471 270h5M469 256h1M469 268h1M470 255h1M470 257h1M470 267h1M470 269h1M471 258h1M471 266h1M478 256h1M478 268h1M479 257h1M479 267h1" stroke="#00f" transform="translate(-.5 0)" class="p"/><path d="M472 259v2M472 264v2M473 261v3M480 258v2M480 265v2M481 260v5" stroke="#00f" transform="translate(0 -.5)" class="p"/>
<path d="M445 268h1" stroke="#00f" transform="translate(-.5 0)" class="p"/>
<path d="M314 454v6M315 460v7" stroke="#fff" transform="translate(0 -.5)" class="p"/>
<path d="M314 470h5M312 471h2M319 471h2M312 485h2M319 485h2M314 486h5M310 473h1M310 483h1M311 472h1M311 484h1M316 478h1M321 472h1M321 484h1M322 473h1M322 483h1" stroke="#f00" transform="translate(-.5 0)" class="p"/><path d="M308 476v5M309 474v2M309 481v2M323 474v2M323 481v2M324 476v5" stroke="#f00" transform="translate(0 -.5)" class="p"/>
<path d="M313 448h1" stroke="#f00" transform="translate(-.5 0)" class="p"/>
<path d="M155 299h1M159 295h1M163 292h1M167 288h1M171 285h1M175 281h1M179 278h1M183 274h1M187 270h1M191 267h1M195 263h1M199 260h1M203 256h1M207 253h1M211 249h1M215 245h1M219 242h1M223 238h1M227 235h1M231 231h1M235 227h1M239 224h1M243 220h1M247 217h1M251 213h1M255 210h1M259 206h1M263 202h1M267 199h1M271 195h1M275 192h1M279 188h1M283 185h1M287 181h1M291 177h1M295 174h1M299 170h1M303 167h1M307 163h1M311 160h1M315 156h1" stroke="#f00" transform="translate(-.5 0)" class="p"/>
<path d="M155 299h1M158 297h1M161 296h1M164 294h1M167 293h1M170 291h1M173 290h1M176 288h1M179 286h1M182 285h1M185 283h1M188 282h1M191 280h1M194 279h1M197 277h1M200 275h1M203 274h1M206 272h1M209 271h1M212 269h1M215 268h1M218 266h1M221 264h1M224 263h1M227 261h1M230 260h1M233 258h1M236 257h1M239 255h1M242 253h1M245 252h1M248 250h1M251 249h1M254 247h1M257 246h1M260 244h1M263 242h1M266 241h1M269 239h1M272 238h1M275 236h1M278 234h1M281 233h1M284 231h1M287 230h1M290 228h1M293 227h1M296 225h1M299 223h1M302 222h1M305 220h1M308 219h1M311 217h1M314 216h1M317 214h1M320 212h1M323 211h1M326 209h1M329 208h1M332 206h1M335 205h1M338 203h1M341 201h1M344 200h1M347 198h1M350 197h1M353 195h1M356 194h1M359 192h1M362 190h1M365 189h1M368 187h1M371 186h1M374 184h1M377 183h1M380 181h1" stroke="#0f0" transform="translate(-.5 0)" class="p"/>
<path d="M155 299h1M156 300h1M157 301h1M158 302h1M159 303h1M160 304h1M161 305h1M162 306h1M163 307h1M164 308h1M165 309h1M166 310h1M167 311h1M168 312h1M169 313h1M170 314h1M171 315h1M172 316h1M173 317h1M174 318h1M175 319h1M176 320h1M177 321h1M178 322h1M179 323h1M180 324h1M181 325h1M182 326h1M183 327h1M184 328h1M185 329h1M186 330h1M187 331h1M188 332h1M189 333h1M190 334h1M191 335h1M192 336h1M193 337h1M194 338h1M195 339h1M196 340h1M197 341h1M198 342h1M199 343h1M200 344h1M201 345h1M202 346h1M203 347h1M204 348h1M205 349h1M206 350h1M207 351h1M208 352h1M209 353h1M210 354h1M211 355h1M212 356h1M213 357h1M214 358h1M215 359h1M216 360h1M217 361h1M218 362h1M219 363h1M220 364h1M221 365h1M222 366h1M223 367h1M224 368h1M225 369h1M226 370h1M227 371h1M228 372h1M229 373h1M230 374h1M231 375h1M232 376h1M233 377h1M234 378h1M235 379h1M236 380h1M237 381h1M238 382h1M239 383h1M240 384h1M241 385h1M242 386h1M243 387h1M244 388h1M245 389h1M246 390h1M247 391h1M248 392h1M249 393h1M250 394h1M251 395h1M252 396h1M253 397h1M254 398h1M255 399h1M256 400h1M257 401h1M258 402h1M259 403h1M260 404h1M261 405h1M262 406h1M263 407h1M264 408h1M265 409h1M266 410h1M267 411h1M268 412h1M269 413h1M270 414h1M271 415h1M272 416h1M273 417h1M274 418h1M275 419h1M276 420h1M277 421h1M278 422h1M279 423h1M280 424h1M281 425h1M282 426h1M283 427h1M284 428h1M285 429h1M286 430h1M287 431h1M288 432h1M289 433h1M290 434h1M291 435h1M292 436h1M293 437h1M294 438h1M295 439h1M296 440h1M297 441h1M298 442h1" stroke="#f00" transform="translate(-.5 0)" class="p"/>
<path d="M157 301h1M160 304h1M163 306h1M166 309h1M169 312h1M172 314h1M175 317h1M178 320h1M181 323h1M184 325h1M187 328h1M190 331h1M193 333h1M196 336h1M199 339h1M202 342h1M205 344h1M208 347h1M211 350h1M214 352h1M217 355h1M220 358h1M223 361h1M226 363h1M229 366h1M232 369h1M235 371h1M238 374h1M241 377h1M244 380h1M247 382h1M250 385h1M253 388h1M256 390h1M259 393h1M262 396h1M265 399h1M268 401h1M271 404h1M274 407h1M277 409h1M280 412h1M283 415h1M286 418h1M289 420h1M292 423h1M295 426h1M298 428h1M301 431h1M304 434h1M307 437h1M310 439h1M313 442h1" stroke="#f00" transform="translate(-.5 0)" class="p"/>
<path d="M431 315h2M411 334h2M390 354h2M370 373h2M349 393h2M328 413h2M308 432h2M298 442h1M299 441h1M300 440h1M301 439h1M302 438h1M303 437h1M304 436h1M305 435h1M306 434h1M307 433h1M310 431h1M311 430h1M312 429h1M313 428h1M314 427h1M315 426h1M316 425h1M317 424h1M318 423h1M319 422h1M320 421h1M321 420h1M322 419h1M323 418h1M324 417h1M325 416h1M326 415h1M327 414h1M330 412h1M331 411h1M332 410h1M333 409h1M334 408h1M335 407h1M336 406h1M337 405h1M338 404h1M339 403h1M340 402h1M341 401h1M342 400h1M343 399h1M344 398h1M345 397h1M346 396h1M347 395h1M348 394h1M351 392h1M352 391h1M353 390h1M354 389h1M355 388h1M356 387h1M357 386h1M358 385h1M359 384h1M360 383h1M361 382h1M362 381h1M363 380h1M364 379h1M365 378h1M366 377h1M367 376h1M368 375h1M369 374h1M372 372h1M373 371h1M374 370h1M375 369h1M376 368h1M377 367h1M378 366h1M379 365h1M380 364h1M381 363h1M382 362h1M383 361h1M384 360h1M385 359h1M386 358h1M387 357h1M388 356h1M389 355h1M392 353h1M393 352h1M394 351h1M395 350h1M396 349h1M397 348h1M398 347h1M399 346h1M400 345h1M401 344h1M402 343h1M403 342h1M404 341h1M405 340h1M406 339h1M407 338h1M408 337h1M409 336h1M410 335h1M413 333h1M414 332h1M415 331h1M416 330h1M417 329h1M418 328h1M419 327h1M420 326h1M421 325h1M422 324h1M423 323h1M424 322h1M425 321h1M426 320h1M427 319h1M428 318h1M429 317h1M430 316h1M433 314h1M434 313h1M435 312h1M436 311h1M437 310h1M438 309h1M439 308h1M440 307h1M441 306h1M442 305h1" stroke="#f00" transform="translate(-.5 0)" class="p"/>
<path d="M426 363h2M423 364h3M420 365h3M417 366h3M414 367h3M410 368h4M407 369h3M404 370h3M401 371h3M398 372h3M395 373h3M392 374h3M389 375h3M386 376h3M383 377h3M380 378h3M376 379h4M373 380h3M370 381h3M367 382h3M364 383h3M361 384h3M358 385h3M355 386h3M352 387h3M349 388h3M345 389h4M342 390h3M339 391h3M336 392h3M333 393h3M330 394h3M327 395h3M324 396h3M321 397h3M318 398h3M315 399h3M311 400h4M308 401h3M305 402h3M302 403h3M299 404h3M296 405h3M293 406h3M290 407h3M287 408h3M284 409h3M280 410h4M277 411h3M274 412h3M271 413h3M268 414h3M265 415h3M262 416h3M259 417h3M256 418h3M253 419h3M250 420h3M246 421h4M243 422h3M240 423h3M237 424h3M234 425h3M232 426h2" stroke="#f00" transform="translate(-.5 0)" class="p"/>
<path d="M298 442h1M301 440h1M304 438h1M307 436h1M310 435h1M313 433h1M316 431h1M319 429h1M322 427h1M325 425h1M328 424h1M331 422h1M334 420h1M337 418h1M340 416h1M343 414h1M346 413h1M349 411h1M352 409h1M355 407h1M358 405h1M361 403h1M364 402h1M367 400h1M370 398h1M373 396h1M376 394h1M379 392h1M382 391h1M385 389h1M388 387h1M391 385h1M394 383h1M397 381h1M400 380h1M403 378h1M406 376h1M409 374h1M412 372h1M415 370h1M418 369h1M421 367h1M424 365h1M427 363h1" stroke="#0ff" transform="translate(-.5 0)" class="p"/>
<path d="M313 442h1M315 441h1M317 439h1M319 438h1M321 436h1M323 435h1M325 434h1M327 432h1M329 431h1M331 430h1M333 428h1M335 427h1M337 425h1M339 424h1M341 423h1M343 421h1M345 420h1M347 418h1M349 417h1M351 416h1M353 414h1M355 413h1M357 412h1M359 410h1M361 409h1M363 407h1M365 406h1M367 405h1M369 403h1M371 402h1M373 400h1M375 399h1M377 398h1M379 396h1M381 395h1M383 393h1M385 392h1M387 391h1M389 389h1M391 388h1M393 387h1M395 385h1M397 384h1M399 382h1M401 381h1M403 380h1M405 378h1M407 377h1M409 375h1M411 374h1M413 373h1M415 371h1M417 370h1M419 369h1M421 367h1M423 366h1M425 364h1M427 363h1" stroke="#0ff" transform="translate(-.5 0)" class="p"/>
<path d="M429 239h1M431 243h1M432 247h1M434 251h1" stroke="#ff0" transform="translate(-.5 0)" class="p"/>
<path d="M298 442h1M299 440h1M301 438h1M302 436h1M303 434h1M304 432h1M306 430h1M307 428h1M308 426h1M309 424h1M311 422h1M312 420h1M313 418h1M314 416h1M316 414h1M317 412h1M318 410h1M319 408h1M321 406h1M322 404h1M323 402h1M325 400h1M326 398h1M327 396h1M328 394h1M330 392h1M331 390h1M332 388h1M333 386h1M335 384h1M336 382h1M337 380h1M338 378h1M340 376h1M341 374h1M342 372h1M343 370h1M345 368h1M346 366h1M347 364h1M348 362h1M350 360h1M351 358h1M352 356h1M354 354h1M355 352h1M356 350h1M357 348h1M359 346h1M360 344h1M361 342h1M362 340h1M364 338h1M365 336h1M366 334h1M367 332h1M369 330h1M370 328h1M371 326h1M372 324h1M374 322h1M375 320h1M376 318h1M378 316h1M379 314h1M380 312h1M381 310h1M383 308h1M384 306h1M385 304h1M386 302h1M388 300h1M389 298h1M390 296h1M391 294h1M393 292h1M394 290h1M395 288h1M396 286h1M398 284h1M399 282h1M400 280h1M401 278h1M403 276h1M404 274h1M405 272h1M407 270h1M408 268h1M409 266h1M410 264h1M412 262h1M413 260h1M414 258h1M415 256h1M417 254h1M418 252h1M419 250h1M420 248h1M422 246h1M423 244h1M424 242h1M425 240h1M427 238h1M428 236h1" stroke="#0f0" transform="translate(-.5 0)" class="p"/>
<path d="M232 426h1M234 422h1M237 418h1M239 414h1M242 410h1M244 406h1M246 402h1M249 398h1M251 394h1M254 390h1M256 386h1M259 382h1M261 378h1M263 374h1M266 370h1M268 366h1M271 362h1M273 358h1M275 354h1M278 350h1M280 346h1M283 342h1M285 338h1M288 334h1M290 330h1M292 326h1M295 322h1M297 318h1M300 314h1M302 310h1M304 306h1M307 302h1M309 298h1M312 294h1M314 290h1M317 286h1M319 282h1M321 278h1M324 274h1M326 270h1M329 266h1M331 262h1M333 258h1M336 254h1M338 250h1M341 246h1M343 242h1M346 238h1M348 234h1M350 230h1M353 226h1M355 222h1M358 218h1M360 214h1M362 210h1M365 206h1M367 202h1M370 198h1M372 194h1M375 190h1M377 186h1M379 182h1" stroke="#00f" transform="translate(-.5 0)" class="p"/>
<path d="M157 316h1M159 319h1M161 322h1M163 325h1M165 328h1M167 331h1M169 334h1M171 337h1M173 340h1M175 343h1M177 346h1M180 349h1M182 352h1M184 355h1M186 358h1M188 361h1M190 364h1M192 367h1M194 370h1M196 373h1M198 376h1M200 379h1M202 382h1M204 385h1M206 388h1M208 391h1M210 394h1M212 397h1M214 400h1M216 403h1M218 406h1M220 409h1M222 412h1M225 415h1M227 418h1M229 421h1M231 424h1" stroke="#0ff" transform="translate(-.5 0)" class="p"/>
<path d="M267 439h1M269 437h1M271 435h1M272 433h1M274 431h1M276 429h1M278 427h1M279 425h1M281 423h1M283 421h1M285 419h1M287 417h1M288 415h1M290 413h1M292 411h1M294 409h1M295 407h1M297 405h1M299 403h1M301 401h1M303 399h1M304 397h1M306 395h1M308 393h1M310 391h1M311 389h1M313 387h1M315 385h1M317 383h1M319 381h1M320 379h1M322 377h1M324 375h1M326 373h1M327 371h1M329 369h1M331 367h1M333 365h1M335 363h1M336 361h1M338 359h1M340 357h1M342 355h1M343 353h1M345 351h1M347 349h1M349 347h1M350 345h1M352 343h1M354 341h1M356 339h1M358 337h1M359 335h1M361 333h1M363 331h1M365 329h1M366 327h1M368 325h1M370 323h1M372 321h1M374 319h1M375 317h1M377 315h1M379 313h1M381 311h1M382 309h1M384 307h1M386 305h1M388 303h1M390 301h1M391 299h1M393 297h1M395 295h1M397 293h1M398 291h1M400 289h1M402 287h1M404 285h1M406 283h1M407 281h1M409 279h1M411 277h1M413 275h1M414 273h1M416 271h1M418 269h1M420 267h1M422 265h1M423 263h1M425 261h1M427 259h1M429 257h1M430 255h1M432 253h1M434 251h1" stroke="#0f0" transform="translate(-.5 0)" class="p"/>
<path d="M435 253h1M436 257h1M437 261h1M438 265h1M439 269h1" stroke="#ff0" transform="translate(-.5 0)" class="p"/>
<path d="M157 316h1M160 315h1M163 315h1M166 314h1M169 314h1M172 313h1M175 313h1M178 312h1M181 312h1M184 311h1M187 311h1M190 310h1M193 310h1M196 309h1M199 309h1M202 308h1M205 308h1M208 307h1M211 307h1M214 306h1M217 306h1M220 305h1M223 305h1M226 304h1M229 304h1M232 303h1M235 303h1M238 302h1M241 302h1M244 301h1M247 301h1M250 300h1M253 300h1M256 299h1M259 299h1M262 298h1M265 298h1M268 297h1M271 297h1M274 296h1M277 296h1M280 295h1M283 295h1M286 294h1M289 294h1M292 293h1M295 293h1M298 292h1M301 292h1M304 291h1M307 291h1M310 290h1M313 290h1M316 289h1M319 289h1M322 288h1M325 288h1M328 287h1M331 287h1M334 286h1M337 286h1M340 285h1M343 285h1M346 284h1M349 284h1M352 283h1M355 283h1M358 282h1M361 282h1M364 281h1M367 281h1M370 280h1M373 280h1M376 279h1M379 279h1M382 278h1M385 278h1M388 277h1M391 277h1M394 276h1M397 276h1M400 275h1M403 275h1M406 274h1M409 274h1M412 273h1M415 273h1M418 272h1M421 272h1M424 271h1M427 271h1M430 270h1M433 270h1M436 269h1M439 269h1" stroke="#00f" transform="translate(-.5 0)" class="p"/>
<path d="M159 318h2M164 322h2M170 327h2M175 331h2M180 335h2M185 339h2M190 343h2M196 348h2M201 352h2M206 356h2M211 360h2M216 364h2M222 369h2M227 373h2M232 377h2M237 381h2M242 385h2M248 390h2M253 394h2M258 398h2M263 402h2M268 406h2M274 411h2M279 415h2M284 419h2M289 423h2M294 427h2M300 432h2M305 436h2M310 440h2M157 316h1M158 317h1M161 319h1M162 320h1M163 321h1M166 323h1M167 324h1M168 325h1M169 326h1M172 328h1M173 329h1M174 330h1M177 332h1M178 333h1M179 334h1M182 336h1M183 337h1M184 338h1M187 340h1M188 341h1M189 342h1M192 344h1M193 345h1M194 346h1M195 347h1M198 349h1M199 350h1M200 351h1M203 353h1M204 354h1M205 355h1M208 357h1M209 358h1M210 359h1M213 361h1M214 362h1M215 363h1M218 365h1M219 366h1M220 367h1M221 368h1M224 370h1M225 371h1M226 372h1M229 374h1M230 375h1M231 376h1M234 378h1M235 379h1M236 380h1M239 382h1M240 383h1M241 384h1M244 386h1M245 387h1M246 388h1M247 389h1M250 391h1M251 392h1M252 393h1M255 395h1M256 396h1M257 397h1M260 399h1M261 400h1M262 401h1M265 403h1M266 404h1M267 405h1M270 407h1M271 408h1M272 409h1M273 410h1M276 412h1M277 413h1M278 414h1M281 416h1M282 417h1M283 418h1M286 420h1M287 421h1M288 422h1M291 424h1M292 425h1M293 426h1M296 428h1M297 429h1M298 430h1M299 431h1M302 433h1M303 434h1M304 435h1M307 437h1M308 438h1M309 439h1M312 441h1M313 442h1" stroke="#f00" transform="translate(-.5 0)" class="p"/>
<path d="M268 438h1M271 435h1M274 432h1M277 429h1M280 426h1M283 423h1M286 420h1M289 417h1M292 414h1M295 411h1M298 408h1M301 405h1M304 402h1M307 399h1M310 396h1M313 394h1M316 391h1M319 388h1M322 385h1M325 382h1M328 379h1M331 376h1M334 373h1M337 370h1M340 367h1M343 364h1M346 361h1M349 358h1M352 355h1M355 352h1M358 349h1M361 346h1M364 343h1M367 340h1M370 337h1M373 334h1M376 331h1M379 328h1M382 325h1M385 322h1M388 319h1M391 316h1M394 313h1M397 311h1M400 308h1M403 305h1M406 302h1M409 299h1M412 296h1M415 293h1M418 290h1M421 287h1M424 284h1M427 281h1M430 278h1M433 275h1M436 272h1M439 269h1" stroke="#0f0" transform="translate(-.5 0)" class="p"/>
<path d="M301 442h1M305 442h1M309 442h1M313 442h1" stroke="#ff0" transform="translate(-.5 0)" class="p"/>
<path d="M313 442h1M316 438h1M319 434h1M322 430h1M325 426h1M328 422h1M330 418h1M333 414h1M336 410h1M339 406h1M342 402h1M345 398h1M348 394h1M351 390h1M354 386h1M357 382h1M360 378h1M363 374h1M365 370h1M368 366h1M371 362h1M374 358h1M377 354h1M380 350h1M383 346h1M386 342h1M389 338h1M392 334h1M395 330h1M397 326h1M400 322h1M403 318h1M406 314h1M409 310h1M412 306h1M415 302h1M418 298h1M421 294h1M424 290h1M427 286h1M430 282h1M432 278h1M435 274h1M438 270h1" stroke="#f00" transform="translate(-.5 0)" class="p"/>
<path d="M747 107h3M745 108h2M750 108h2M745 110h2M750 111h2M745 113h2M750 113h2M747 114h3M744 109h1M752 112h1" stroke="#f00" transform="translate(-.5 0)" class="p"/><path d="M744 111v2M747 111v2M749 109v2M752 109v2" stroke="#f00" transform="translate(0 -.5)" class="p"/>
<path d="M747 116h3M744 122h1M745 123h1M746 117h1M750 117h1M751 123h1M752 124h1" stroke="#ff0" transform="translate(-.5 0)" class="p"/><path d="M745 118v3M746 121v2M750 121v2M751 118v3" stroke="#ff0" transform="translate(0 -.5)" class="p"/>
<path d="M749 128h3M744 126h1M746 126h1M748 126h1M749 127h1M749 134h1M750 133h1M751 127h1M751 134h1" stroke="#0f0" transform="translate(-.5 0)" class="p"/><path d="M745 127v7M747 127v7M749 129v4M751 129v4" stroke="#0f0" transform="translate(0 -.5)" class="p"/>
<path d="M747 138h3M744 141h4M749 141h4M744 143h9" stroke="#00f" transform="translate(-.5 0)" class="p"/><path d="M746 139v2M750 139v2" stroke="#00f" transform="translate(0 -.5)" class="p"/>
<path d="M750 154h2M744 146h1M746 146h1M748 146h1" stroke="#f00" transform="translate(-.5 0)" class="p"/><path d="M745 147v7M747 147v7M749 147v7M752 152v2" stroke="#f00" transform="translate(0 -.5)" class="p"/>
<path d="M750 156h3M751 157h2M744 164h1M745 159h1M745 163h1M746 160h1M746 162h1M747 161h1M748 160h1M748 162h1M749 159h1M749 163h1M750 158h1M752 158h1" stroke="#ff0" transform="translate(-.5 0)" class="p"/>
<path d="M750 166h2M744 167h2M748 167h2M750 169h2M745 166h1M748 166h1M750 168h1M751 170h1M751 174h1" stroke="#0f0" transform="translate(-.5 0)" class="p"/><path d="M745 168v2M746 170v4M747 168v2M752 167v2M752 171v3" stroke="#0f0" transform="translate(0 -.5)" class="p"/>
<path d="M745 177h2M748 177h2M747 178h2M750 178h2M745 182h2M748 182h2M747 183h2M750 183h2M744 179h1M744 184h1M745 178h1M745 183h1M746 176h1M746 181h1M747 179h1M747 184h1M749 176h1M749 181h1M750 179h1M750 184h1M751 177h1M751 182h1M752 176h1M752 181h1" stroke="#00f" transform="translate(-.5 0)" class="p"/>
<path d="M744 190h9M744 186h1M744 194h1M745 187h1M745 193h1M751 187h1M751 193h1M752 186h1M752 194h1" stroke="#f00" transform="translate(-.5 0)" class="p"/><path d="M746 188v2M746 191v2M750 188v2M750 191v2" stroke="#f00" transform="translate(0 -.5)" class="p"/>
<path d="M745 196h2M750 196h2M745 199h1M751 199h1" stroke="#ff0" transform="translate(-.5 0)" class="p"/><path d="M744 197v2M747 197v3M748 200v5M749 197v3M752 197v2" stroke="#ff0" transform="translate(0 -.5)" class="p"/>
<path d="M747 208h3M747 214h3M745 206h1M746 207h1M746 209h1M746 213h1M750 207h1M750 209h1M750 213h1M751 206h1" stroke="#0f0" transform="translate(-.5 0)" class="p"/><path d="M745 210v3M751 210v3" stroke="#0f0" transform="translate(0 -.5)" class="p"/>
<path d="M746 217h6M746 223h6M745 216h1M745 224h1M752 216h1M752 224h1" stroke="#00f" transform="translate(-.5 0)" class="p"/><path d="M747 218v5M750 218v5" stroke="#00f" transform="translate(0 -.5)" class="p"/>
<path d="M747 236h3M745 237h2M750 237h2M745 243h2M750 243h2M747 244h3M745 238h1M745 242h1M748 240h1M751 238h1M751 242h1" stroke="#f00" transform="translate(-.5 0)" class="p"/><path d="M744 239v3M752 239v3" stroke="#f00" transform="translate(0 -.5)" class="p"/>
<path d="M746 246h3M749 247h2M749 253h2M746 254h3M745 247h1M745 253h1M746 248h1M746 252h1M750 248h1M750 252h1" stroke="#00f" transform="translate(-.5 0)" class="p"/><path d="M747 249v3M751 249v3" stroke="#00f" transform="translate(0 -.5)" class="p"/>
<path d="M747 257h3M747 261h3M746 263h5M746 256h1M748 262h1M748 264h1M750 256h1" stroke="#0f0" transform="translate(-.5 0)" class="p"/><path d="M746 258v3M750 258v3" stroke="#0f0" transform="translate(0 -.5)" class="p"/>
<path d="M747 266h3M747 270h3M746 272h5M748 271h1" stroke="#0f0" transform="translate(-.5 0)" class="p"/><path d="M746 267v3M748 273v2M750 267v3" stroke="#0f0" transform="translate(0 -.5)" class="p"/>
<path d="M750 276h3M751 277h2M746 279h2M746 284h2M745 280h1M745 283h1M748 280h1M748 283h1M749 279h1M750 278h1M752 278h1" stroke="#f00" transform="translate(-.5 0)" class="p"/><path d="M744 281v2M749 281v2" stroke="#f00" transform="translate(0 -.5)" class="p"/>
<path d="M745 287h2M745 293h8M745 292h1M750 294h1M751 286h1" stroke="#f00" transform="translate(-.5 0)" class="p"/><path d="M746 290v2M747 288v2M750 287v6" stroke="#f00" transform="translate(0 -.5)" class="p"/>
<path d="M745 297h5M749 299h2M747 300h2M747 296h1M751 304h1" stroke="#ff0" transform="translate(-.5 0)" class="p"/><path d="M747 298v2M747 301v3M750 302v2M751 300v2" stroke="#ff0" transform="translate(0 -.5)" class="p"/>
<path d="M746 309h5M747 312h3M745 306h1M745 311h1M746 310h1M747 313h1M748 308h1M748 314h1M749 313h1M750 310h1M751 306h1M751 311h1" stroke="#0f0" transform="translate(-.5 0)" class="p"/><path d="M746 307v2M748 310v2M750 307v2" stroke="#0f0" transform="translate(0 -.5)" class="p"/>
<path d="M744 317h2M747 317h3M751 317h2M747 320h3M746 322h5M745 316h1M745 318h1M746 319h1M748 316h1M748 321h1M750 319h1M751 316h1M751 318h1" stroke="#00f" transform="translate(-.5 0)" class="p"/><path d="M748 318v2M748 323v2" stroke="#00f" transform="translate(0 -.5)" class="p"/>
<path d="M747 330h3M746 332h5M746 329h1M747 327h1M748 326h1M748 328h1M748 331h1M749 327h1M750 329h1" stroke="#00f" transform="translate(-.5 0)" class="p"/><path d="M745 326v3M748 333v2M751 326v3" stroke="#00f" transform="translate(0 -.5)" class="p"/>
<path d="M747 336h3M745 342h2M750 342h2M744 343h1M745 344h1M746 337h1M746 341h1M746 343h1M750 337h1M750 341h1M750 343h1M751 344h1M752 343h1" stroke="#007f7f" transform="translate(-.5 0)" class="p"/><path d="M745 338v3M751 338v3" stroke="#007f7f" transform="translate(0 -.5)" class="p"/>
<path d="M0 0H759V599H0ZM599 0V599" stroke="#bfbfbf"/>
</g><g><text class="h" transform="translate(95.3 348) scale(.9 1)" fill="#f00" text-anchor="middle">1</text>
<text class="h" transform="translate(135.3 433) scale(.9 1)" fill="#ff0" text-anchor="middle">2</text>
<text class="h" transform="translate(221.3 498) scale(.9 1)" fill="#0f0" text-anchor="middle">3</text>
<text class="h" transform="translate(338.3 510) scale(.9 1)" fill="#00f" text-anchor="middle">4</text>
<text class="h" transform="translate(445.3 456) scale(.9 1)" fill="#f00" text-anchor="middle">5</text>
<text class="h" transform="translate(502.3 358) scale(.9 1)" fill="#ff0" text-anchor="middle">6</text>
<text class="h" transform="translate(505.3 260) scale(.9 1)" fill="#0f0" text-anchor="middle">7</text>
<text class="h" transform="translate(465.3 175) scale(.9 1)" fill="#00f" text-anchor="middle">8</text>
<text class="h" transform="translate(379.3 110) scale(.9 1)" fill="#f00" text-anchor="middle">9</text>
<text class="h" transform="translate(262.3 98) scale(.9 1)" fill="#ff0" text-anchor="middle">10</text>
<text class="h" transform="translate(155.3 152) scale(.9 1)" fill="#0f0" text-anchor="middle">11</text>
<text class="h" transform="translate(98.3 250) scale(.9 1)" fill="#00f" text-anchor="middle">12</text>
<text transform="translate(111 308) scale(.42 1)" fill="#f00" style="font-family:'Liberation Sans',sans-serif;font-size:24px">Asc</text>
<text transform="translate(310.5 129) scale(.476 1)" fill="#ff0" style="font-family:'Liberation Sans',sans-serif;font-size:24px">MC</text></g></svg>
<pre id="side"><span style="color:#fff">Astrolog 5.40</span>
"Anonymous"
Mon October 26, 2009
10:54pm (ST +8:00 GMT)
"Taiwan"
121°00E 25°00N
Placidus houses.
Tropical, Geocentric.
Julian Day = 2455131.1208

<span style="color:#f00"> 1st house: </span><span style="color:#00f">27Can39</span>
<span style="color:#ff0"> 2nd house: </span><span style="color:#f00">21Leo46</span>
<span style="color:#0f0"> 3rd house: </span><span style="color:#ff0">19Vir24</span>
<span style="color:#00f"> 4th house: </span><span style="color:#0f0">21Lib13</span>
<span style="color:#f00"> 5th house: </span><span style="color:#00f">25Sco03</span>
<span style="color:#ff0"> 6th house: </span><span style="color:#f00">27Sag36</span>
<span style="color:#0f0"> 7th house: </span><span style="color:#ff0">27Cap39</span>
<span style="color:#00f"> 8th house: </span><span style="color:#0f0">21Aqu46</span>
<span style="color:#f00"> 9th house: </span><span style="color:#00f">19Pis24</span>
<span style="color:#ff0">10th house: </span><span style="color:#f00">21Ari13</span>
<span style="color:#0f0">11th house: </span><span style="color:#ff0">25Tau03</span>
<span style="color:#00f">12th house: </span><span style="color:#0f0">27Gem36</span>

<span style="color:#f00"> Sun: </span><span style="color:#00f"> 3Sco19</span><span style="color:#fff"> </span> - 0°00'
<span style="color:#00f">Moon: </span><span style="color:#0f0"> 9Aqu42</span><span style="color:#fff"> </span> + 1°18'
<span style="color:#0f0">Merc: </span><span style="color:#0f0">26Lib58</span><span style="color:#fff"> </span> + 1°15'
<span style="color:#0f0">Venu: </span><span style="color:#0f0">14Lib30</span><span style="color:#fff"> </span> + 1°32'
<span style="color:#f00">Mars: </span><span style="color:#f00"> 4Leo48</span><span style="color:#fff"> </span> + 1°22'
<span style="color:#f00">Jupi: </span><span style="color:#0f0">17Aqu30</span><span style="color:#fff"> </span> - 1°02'
<span style="color:#ff0">Satu: </span><span style="color:#ff0">29Vir35</span><span style="color:#fff"> </span> + 2°02'
<span style="color:#0f0">Uran: </span><span style="color:#00f">23Pis14</span><span style="color:#fff">R</span> - 0°47'
<span style="color:#00f">Nept: </span><span style="color:#0f0">23Aqu43</span><span style="color:#fff">R</span> - 0°25'
<span style="color:#00f">Plut: </span><span style="color:#ff0"> 1Cap10</span><span style="color:#fff"> </span> + 5°17'
<span style="color:#007f7f">Node: </span><span style="color:#ff0">25Cap09</span><span style="color:#fff">R</span> + 0°00'

Fire: 2, Earth: 3,
Air : 5, Water: 3
Car: 6, Fix: 5, Mut: 2
Yang: 7, Yin: 6
M: 4, N: 7, A: 3, D: 8
Ang: 5, Suc: 1, Cad: 5
Learn: 4, Share: 9</pre>
</div>
</body></html>
